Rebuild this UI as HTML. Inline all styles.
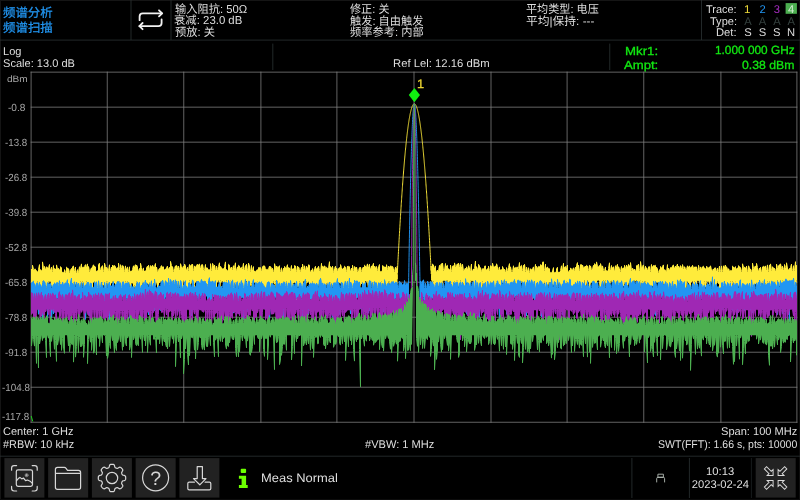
<!DOCTYPE html>
<html lang="zh">
<head>
<meta charset="utf-8">
<title>频谱分析</title>
<style>
html,body{margin:0;padding:0;background:#000;}
body{width:800px;height:500px;position:relative;overflow:hidden;
  font-family:"Liberation Sans","Noto Sans CJK SC",sans-serif;color:#dedede;font-size:11.2px;line-height:1;text-rendering:geometricPrecision;}
.t{position:absolute;white-space:nowrap;transform-origin:0 0;}
.b{font-size:11.2px;}
.c{font-size:11.5px;}
.big{font-size:12.4px;-webkit-text-stroke:0.25px #2196f3;}
.g{font-size:11.8px;color:#12e812;-webkit-text-stroke:0.3px #12e812;}
.m{font-size:12.2px;}
.y{font-size:10.3px;color:#a6a6a6;}
.y0{font-size:9.2px;}
.blue{color:#2196f3;}
.yel{color:#f0dc3a;}
.mk{font-size:12.3px;color:#e8d232;-webkit-text-stroke:0.3px #e8d232;}
.pur{color:#a62cc0;}
.dim{color:#34403e;}
.n4{color:#d4ecd4;}
.vl{position:absolute;width:1px;background:#232a2a;}
.hl{position:absolute;height:1px;background:#1e2828;}
.box{position:absolute;}
.btn{position:absolute;top:458px;width:40px;height:39.6px;background:#222;}
svg{position:absolute;left:0;top:0;}
#root{position:absolute;left:0;top:0;width:800px;height:500px;will-change:transform;}
</style>
</head>
<body>
<div id="root">
<!-- outer frame -->
<div class="hl" style="left:0;top:0;width:800px;background:#151515"></div>
<div class="vl" style="left:0;top:0;height:500px;background:#141414"></div>
<div class="vl" style="left:799px;top:0;height:500px;background:#0e0e0e"></div>
<div class="hl" style="left:0;top:499px;width:800px;background:#0c0c0c"></div>

<!-- highlighted trace number -->
<svg width="800" height="20" viewBox="0 0 800 20"><rect x="785.6" y="3.1" width="11.3" height="10.7" fill="#4caf50"/></svg>


<!-- all text -->
<div class="t c blue big" id="t1" style="left:2.75px;top:7.10px;transform:scaleX(1.003)">频谱分析</div>
<div class="t c blue big" id="t2" style="left:2.75px;top:21.50px;transform:scaleX(1.004)">频谱扫描</div>
<div class="t c" id="a1" style="left:174.59px;top:5.25px;transform:scaleX(0.979)">输入阻抗: 50Ω</div>
<div class="t c" id="a2" style="left:174.27px;top:15.85px;transform:scaleX(0.989)">衰减: 23.0 dB</div>
<div class="t c" id="a3" style="left:175.10px;top:27.65px;transform:scaleX(0.980)">预放: 关</div>
<div class="t c" id="b1" style="left:350.41px;top:5.25px;transform:scaleX(0.966)">修正: 关</div>
<div class="t c" id="b2" style="left:350.41px;top:17.25px;transform:scaleX(0.973)">触发: 自由触发</div>
<div class="t c" id="b3" style="left:350.41px;top:28.25px;transform:scaleX(0.977)">频率参考: 内部</div>
<div class="t c" id="c1" style="left:526.02px;top:5.25px;transform:scaleX(0.966)">平均类型: 电压</div>
<div class="t c" id="c2" style="left:525.99px;top:17.25px;transform:scaleX(1.023)">平均|保持: ---</div>
<div class="t b" id="d1" style="left:706.06px;top:5.25px;transform:scaleX(0.978)">Trace:</div>
<div class="t b" id="d2" style="left:709.81px;top:16.65px;transform:scaleX(0.985)">Type:</div>
<div class="t b" id="d3" style="left:715.84px;top:28.25px;transform:scaleX(1.003)">Det:</div>
<div class="t b yel" id="n1" style="left:744.45px;top:5.25px;transform:scaleX(1.040)">1</div>
<div class="t b blue" id="n2" style="left:759.38px;top:5.25px">2</div>
<div class="t b pur" id="n3" style="left:773.85px;top:5.25px">3</div>
<div class="t b n4" id="n4" style="left:788.12px;top:5.25px">4</div>
<div class="t b dim" id="A1" style="left:744.28px;top:16.65px">A</div>
<div class="t b dim" id="A2" style="left:758.75px;top:16.65px">A</div>
<div class="t b dim" id="A3" style="left:773.22px;top:16.65px">A</div>
<div class="t b dim" id="A4" style="left:787.50px;top:16.65px">A</div>
<div class="t b" id="S1" style="left:744.28px;top:28.25px">S</div>
<div class="t b" id="S2" style="left:758.75px;top:28.25px">S</div>
<div class="t b" id="S3" style="left:773.10px;top:28.25px">S</div>
<div class="t b" id="S4" style="left:787.12px;top:28.25px">N</div>
<div class="t b" id="e1" style="left:3.12px;top:47.25px;transform:scaleX(0.988)">Log</div>
<div class="t b" id="e2" style="left:3.01px;top:58.75px;transform:scaleX(0.989)">Scale: 13.0 dB</div>
<div class="t b" id="e3" style="left:392.84px;top:59.15px;transform:scaleX(1.010)">Ref Lel: 12.16 dBm</div>
<div class="t g" id="g1" style="left:624.97px;top:45.90px;transform:scaleX(1.122)">Mkr1:</div>
<div class="t g" id="g2" style="left:624.13px;top:60.15px;transform:scaleX(1.112)">Ampt:</div>
<div class="t g" id="g3" style="left:715.15px;top:45.15px;transform:scaleX(1.003)">1.000 000 GHz</div>
<div class="t g" id="g4" style="left:742.15px;top:59.50px;transform:scaleX(1.038)">0.38 dBm</div>
<div class="t y y0" id="y0" style="left:6.70px;top:75.20px;transform:scaleX(1.098)">dBm</div>
<div class="t b" id="f1" style="left:2.97px;top:427.45px;transform:scaleX(0.985)">Center: 1 GHz</div>
<div class="t b" id="f2" style="left:3.15px;top:439.55px;transform:scaleX(0.972)">#RBW: 10 kHz</div>
<div class="t b" id="f3" style="left:364.72px;top:440.05px;transform:scaleX(0.989)">#VBW: 1 MHz</div>
<div class="t b" id="f4" style="left:720.56px;top:427.45px;transform:scaleX(0.989)">Span: 100 MHz</div>
<div class="t b" id="f5" style="left:657.78px;top:439.55px;transform:scaleX(0.941)">SWT(FFT): 1.66 s, pts: 10000</div>
<div class="t m" id="m1" style="left:260.80px;top:471.85px;transform:scaleX(1.060)">Meas Normal</div>
<div class="t b" id="k1" style="left:706.14px;top:467.25px;transform:scaleX(1.006)">10:13</div>
<div class="t b" id="k2" style="left:691.76px;top:480.05px">2023-02-24</div>
<div class="t mk" id="mk" style="left:416.86px;top:77.60px;transform:scaleX(1.040)">1</div>
<div class="t y" id="y1" style="left:7.59px;top:104.29px;transform:scaleX(0.980)">-0.8</div>
<div class="t y" id="y2" style="left:5.22px;top:139.33px;transform:scaleX(0.947)">-13.8</div>
<div class="t y" id="y3" style="left:5.22px;top:174.37px;transform:scaleX(0.947)">-26.8</div>
<div class="t y" id="y4" style="left:5.22px;top:209.41px;transform:scaleX(0.947)">-39.8</div>
<div class="t y" id="y5" style="left:5.22px;top:244.45px;transform:scaleX(0.947)">-52.8</div>
<div class="t y" id="y6" style="left:5.22px;top:279.49px;transform:scaleX(0.947)">-65.8</div>
<div class="t y" id="y7" style="left:5.22px;top:313.53px;transform:scaleX(0.947)">-78.8</div>
<div class="t y" id="y8" style="left:5.22px;top:348.57px;transform:scaleX(0.947)">-91.8</div>
<div class="t y" id="y9" style="left:2.00px;top:383.61px;transform:scaleX(0.954)">-104.8</div>
<div class="t y" id="y10" style="left:2.00px;top:413.05px;transform:scaleX(0.954)">-117.8</div>


<!-- plot + icons -->
<svg width="800" height="500" viewBox="0 0 800 500">
<g fill="#222222"><rect x="4.40" y="458.1" width="40" height="39.5"/><rect x="48.15" y="458.1" width="40" height="39.5"/><rect x="91.90" y="458.1" width="40" height="39.5"/><rect x="135.65" y="458.1" width="40" height="39.5"/><rect x="179.40" y="458.1" width="40" height="39.5"/><rect x="755.70" y="458.1" width="40" height="39.5"/></g>
<g stroke="#2b3234" stroke-width="0.8">
<line x1="0" y1="40.1" x2="800" y2="40.1"/>
<line x1="0" y1="456.2" x2="800" y2="456.2"/>
<line x1="131.0" y1="0" x2="131.0" y2="40"/>
<line x1="171.0" y1="0" x2="171.0" y2="40"/>
<line x1="701.5" y1="0" x2="701.5" y2="40"/>
<line x1="272.8" y1="43.6" x2="272.8" y2="70"/>
<line x1="609.75" y1="43.6" x2="609.75" y2="70"/>
<line x1="631.9" y1="458" x2="631.9" y2="498"/>
<line x1="689.4" y1="458" x2="689.4" y2="498"/>
<line x1="751.4" y1="458" x2="751.4" y2="498" stroke="#1c2122"/>
</g>
<g stroke="#808080" stroke-width="0.78"><line x1="31.10" y1="71.65" x2="31.10" y2="422.75"/><line x1="107.25" y1="71.65" x2="107.25" y2="422.75"/><line x1="183.75" y1="71.65" x2="183.75" y2="422.75"/><line x1="260.90" y1="71.65" x2="260.90" y2="422.75"/><line x1="336.90" y1="71.65" x2="336.90" y2="422.75"/><line x1="414.00" y1="71.65" x2="414.00" y2="422.75"/><line x1="491.00" y1="71.65" x2="491.00" y2="422.75"/><line x1="567.10" y1="71.65" x2="567.10" y2="422.75"/><line x1="643.75" y1="71.65" x2="643.75" y2="422.75"/><line x1="720.90" y1="71.65" x2="720.90" y2="422.75"/><line x1="796.90" y1="71.65" x2="796.90" y2="422.75"/><line x1="30.60" y1="72.15" x2="797.40" y2="72.15"/><line x1="30.60" y1="107.16" x2="797.40" y2="107.16"/><line x1="30.60" y1="142.17" x2="797.40" y2="142.17"/><line x1="30.60" y1="177.18" x2="797.40" y2="177.18"/><line x1="30.60" y1="212.19" x2="797.40" y2="212.19"/><line x1="30.60" y1="247.20" x2="797.40" y2="247.20"/><line x1="30.60" y1="282.21" x2="797.40" y2="282.21"/><line x1="30.60" y1="317.22" x2="797.40" y2="317.22"/><line x1="30.60" y1="352.23" x2="797.40" y2="352.23"/><line x1="30.60" y1="387.24" x2="797.40" y2="387.24"/><line x1="30.60" y1="422.25" x2="797.40" y2="422.25"/></g>
<g fill="none" stroke-width="1" stroke-linejoin="bevel">
<path d="M31.5 269.0L31.5 282.6L32.5 292.1L32.5 265.2L33.5 269.3L33.5 285.8L34.5 286.6L34.5 269.2L35.5 269.1L35.5 290.2L36.5 285.4L36.5 270.5L37.5 271.6L37.5 281.6L38.5 285.6L38.5 269.2L39.5 264.6L39.5 285.9L40.5 285.3L40.5 269.6L41.5 270.3L41.5 287.9L42.5 281.4L42.5 261.9L43.5 267.9L43.5 282.1L44.5 287.7L44.5 266.4L45.5 268.8L45.5 292.0L46.5 286.4L46.5 266.8L47.5 267.4L47.5 284.3L48.5 281.7L48.5 267.8L49.5 264.5L49.5 281.6L50.5 281.6L50.5 270.0L51.5 267.1L51.5 285.2L52.5 287.2L52.5 271.3L53.5 265.6L53.5 290.3L54.5 294.4L54.5 268.4L55.5 269.0L55.5 290.2L56.5 283.4L56.5 264.9L57.5 269.0L57.5 293.7L58.5 283.5L58.5 268.3L59.5 269.5L59.5 292.7L60.5 282.6L60.5 266.6L61.5 267.7L61.5 288.1L62.5 284.9L62.5 272.1L63.5 272.2L63.5 287.2L64.5 284.3L64.5 269.6L65.5 272.3L65.5 287.7L66.5 285.3L66.5 267.1L67.5 268.0L67.5 286.8L68.5 289.7L68.5 268.6L69.5 272.7L69.5 290.5L70.5 288.1L70.5 270.1L71.5 268.4L71.5 301.9L72.5 289.0L72.5 266.7L73.5 266.0L73.5 282.6L74.5 291.5L74.5 270.3L75.5 267.0L75.5 284.4L76.5 283.1L76.5 272.5L77.5 269.6L77.5 284.6L78.5 296.8L78.5 272.1L79.5 266.7L79.5 294.4L80.5 281.7L80.5 267.9L81.5 263.9L81.5 287.9L82.5 281.6L82.5 267.2L83.5 267.1L83.5 300.6L84.5 286.1L84.5 266.4L85.5 264.6L85.5 301.1L86.5 281.4L86.5 266.8L87.5 263.9L87.5 284.3L88.5 294.8L88.5 266.5L89.5 271.5L89.5 286.3L90.5 304.6L90.5 270.1L91.5 267.8L91.5 290.6L92.5 296.8L92.5 266.7L93.5 264.8L93.5 282.1L94.5 281.6L94.5 266.0L95.5 266.9L95.5 302.5L96.5 285.0L96.5 271.1L97.5 270.6L97.5 293.0L98.5 284.1L98.5 264.4L99.5 263.2L99.5 285.1L100.5 300.8L100.5 269.7L101.5 266.6L101.5 294.0L102.5 282.6L102.5 265.6L103.5 271.3L103.5 285.2L104.5 285.1L104.5 263.2L105.5 266.6L105.5 292.5L106.5 281.4L106.5 267.2L107.5 268.2L107.5 281.6L108.5 286.9L108.5 270.1L109.5 264.8L109.5 284.2L110.5 288.3L110.5 270.5L111.5 267.0L111.5 283.2L112.5 281.7L112.5 265.0L113.5 266.0L113.5 283.0L114.5 283.0L114.5 265.4L115.5 266.7L115.5 288.8L116.5 288.3L116.5 268.2L117.5 267.6L117.5 281.5L118.5 286.4L118.5 263.2L119.5 269.5L119.5 281.4L120.5 294.3L120.5 264.7L121.5 267.5L121.5 290.0L122.5 294.3L122.5 265.4L123.5 266.2L123.5 285.2L124.5 304.5L124.5 271.2L125.5 265.9L125.5 281.4L126.5 289.2L126.5 269.0L127.5 266.9L127.5 281.4L128.5 286.1L128.5 271.3L129.5 266.8L129.5 282.1L130.5 290.3L130.5 271.1L131.5 270.9L131.5 283.3L132.5 283.2L132.5 269.3L133.5 265.8L133.5 290.7L134.5 285.5L134.5 266.5L135.5 264.7L135.5 286.6L136.5 281.3L136.5 265.0L137.5 267.0L137.5 286.2L138.5 294.3L138.5 270.8L139.5 268.4L139.5 284.3L140.5 290.9L140.5 263.3L141.5 267.5L141.5 289.1L142.5 281.0L142.5 270.2L143.5 267.9L143.5 294.2L144.5 288.4L144.5 271.0L145.5 270.7L145.5 295.6L146.5 300.0L146.5 267.9L147.5 266.2L147.5 283.4L148.5 284.4L148.5 265.1L149.5 269.1L149.5 282.5L150.5 287.8L150.5 265.6L151.5 266.3L151.5 281.7L152.5 290.2L152.5 265.2L153.5 266.6L153.5 283.5L154.5 281.8L154.5 266.4L155.5 263.5L155.5 285.5L156.5 282.0L156.5 267.1L157.5 271.9L157.5 294.0L158.5 288.1L158.5 270.1L159.5 268.4L159.5 282.8L160.5 281.7L160.5 267.3L161.5 265.6L161.5 281.8L162.5 287.4L162.5 266.8L163.5 266.8L163.5 284.8L164.5 289.1L164.5 269.8L165.5 268.8L165.5 287.4L166.5 282.2L166.5 267.5L167.5 266.1L167.5 284.8L168.5 290.1L168.5 268.6L169.5 267.2L169.5 286.6L170.5 290.8L170.5 261.4L171.5 265.6L171.5 294.7L172.5 281.6L172.5 266.6L173.5 271.4L173.5 284.6L174.5 290.2L174.5 268.6L175.5 265.8L175.5 282.8L176.5 284.3L176.5 265.4L177.5 267.3L177.5 281.1L178.5 294.6L178.5 266.0L179.5 269.5L179.5 285.2L180.5 287.6L180.5 263.7L181.5 266.8L181.5 283.5L182.5 288.6L182.5 267.6L183.5 266.1L183.5 280.6L184.5 282.1L184.5 264.1L185.5 265.5L185.5 291.7L186.5 287.3L186.5 270.0L187.5 267.2L187.5 296.5L188.5 290.4L188.5 270.5L189.5 264.5L189.5 280.3L190.5 294.5L190.5 265.5L191.5 264.6L191.5 281.1L192.5 285.6L192.5 264.1L193.5 270.7L193.5 300.3L194.5 284.4L194.5 265.9L195.5 266.9L195.5 282.2L196.5 281.3L196.5 265.2L197.5 264.2L197.5 289.6L198.5 281.4L198.5 264.8L199.5 264.0L199.5 293.6L200.5 286.5L200.5 267.7L201.5 264.7L201.5 291.6L202.5 281.6L202.5 264.5L203.5 269.3L203.5 281.8L204.5 289.9L204.5 270.2L205.5 264.5L205.5 281.4L206.5 289.9L206.5 267.7L207.5 268.0L207.5 284.5L208.5 295.6L208.5 269.5L209.5 269.6L209.5 288.5L210.5 294.9L210.5 263.7L211.5 270.7L211.5 303.3L212.5 284.8L212.5 263.4L213.5 265.4L213.5 286.9L214.5 283.3L214.5 265.0L215.5 269.8L215.5 293.7L216.5 291.7L216.5 266.0L217.5 269.5L217.5 282.1L218.5 280.7L218.5 266.3L219.5 262.8L219.5 295.2L220.5 280.8L220.5 266.3L221.5 267.9L221.5 281.8L222.5 281.2L222.5 268.7L223.5 268.5L223.5 289.4L224.5 285.9L224.5 266.6L225.5 261.9L225.5 296.1L226.5 280.5L226.5 269.5L227.5 270.4L227.5 290.1L228.5 290.4L228.5 264.3L229.5 265.1L229.5 299.8L230.5 280.1L230.5 268.1L231.5 267.0L231.5 292.9L232.5 282.5L232.5 269.5L233.5 265.7L233.5 288.4L234.5 287.4L234.5 267.2L235.5 262.8L235.5 282.7L236.5 289.2L236.5 270.1L237.5 266.9L237.5 288.4L238.5 285.1L238.5 265.3L239.5 266.1L239.5 289.1L240.5 284.0L240.5 267.9L241.5 267.3L241.5 297.2L242.5 283.0L242.5 268.5L243.5 263.3L243.5 290.1L244.5 298.8L244.5 269.7L245.5 265.5L245.5 281.0L246.5 281.1L246.5 264.1L247.5 270.1L247.5 287.3L248.5 282.6L248.5 263.1L249.5 266.0L249.5 286.5L250.5 285.4L250.5 271.2L251.5 265.5L251.5 283.6L252.5 290.9L252.5 269.7L253.5 266.6L253.5 281.0L254.5 282.4L254.5 271.0L255.5 271.3L255.5 307.6L256.5 284.7L256.5 270.2L257.5 269.6L257.5 281.8L258.5 289.8L258.5 267.5L259.5 267.4L259.5 289.1L260.5 304.3L260.5 267.5L261.5 270.7L261.5 298.1L262.5 294.2L262.5 266.8L263.5 265.7L263.5 293.2L264.5 285.9L264.5 265.8L265.5 268.6L265.5 293.7L266.5 287.3L266.5 269.3L267.5 269.3L267.5 282.0L268.5 298.3L268.5 269.1L269.5 266.1L269.5 282.0L270.5 297.4L270.5 266.5L271.5 268.3L271.5 286.1L272.5 283.1L272.5 268.2L273.5 271.6L273.5 281.6L274.5 284.2L274.5 263.7L275.5 267.1L275.5 281.5L276.5 293.7L276.5 266.0L277.5 267.1L277.5 281.5L278.5 293.6L278.5 267.0L279.5 265.7L279.5 282.1L280.5 296.5L280.5 271.6L281.5 267.8L281.5 289.8L282.5 299.3L282.5 271.9L283.5 268.2L283.5 281.8L284.5 290.2L284.5 266.4L285.5 267.4L285.5 286.8L286.5 281.4L286.5 267.3L287.5 264.7L287.5 307.7L288.5 302.2L288.5 267.4L289.5 268.0L289.5 295.8L290.5 285.1L290.5 270.5L291.5 265.5L291.5 292.2L292.5 283.9L292.5 268.9L293.5 268.6L293.5 283.1L294.5 282.3L294.5 265.5L295.5 266.0L295.5 292.6L296.5 303.8L296.5 271.2L297.5 266.0L297.5 286.5L298.5 286.4L298.5 266.9L299.5 269.3L299.5 281.3L300.5 290.9L300.5 271.2L301.5 267.3L301.5 286.8L302.5 288.4L302.5 264.1L303.5 268.5L303.5 281.2L304.5 281.1L304.5 265.8L305.5 269.9L305.5 287.3L306.5 281.3L306.5 266.1L307.5 267.9L307.5 282.4L308.5 281.7L308.5 264.8L309.5 265.2L309.5 288.6L310.5 298.6L310.5 271.5L311.5 269.9L311.5 301.1L312.5 281.7L312.5 268.6L313.5 271.9L313.5 293.4L314.5 287.8L314.5 268.4L315.5 266.3L315.5 290.4L316.5 288.6L316.5 268.9L317.5 267.6L317.5 287.1L318.5 284.7L318.5 266.1L319.5 270.4L319.5 285.7L320.5 282.0L320.5 272.0L321.5 263.3L321.5 289.8L322.5 289.8L322.5 266.1L323.5 266.7L323.5 292.1L324.5 291.9L324.5 265.8L325.5 267.2L325.5 286.5L326.5 283.6L326.5 267.2L327.5 268.1L327.5 282.1L328.5 291.9L328.5 267.9L329.5 261.7L329.5 294.5L330.5 282.3L330.5 266.5L331.5 267.6L331.5 288.0L332.5 285.4L332.5 266.0L333.5 272.1L333.5 282.1L334.5 288.7L334.5 268.5L335.5 266.2L335.5 299.3L336.5 297.3L336.5 267.9L337.5 270.6L337.5 285.1L338.5 309.7L338.5 268.4L339.5 267.5L339.5 282.9L340.5 283.3L340.5 264.6L341.5 267.6L341.5 286.9L342.5 292.3L342.5 268.9L343.5 268.0L343.5 297.7L344.5 281.9L344.5 266.2L345.5 267.1L345.5 281.8L346.5 286.1L346.5 271.2L347.5 266.1L347.5 295.1L348.5 293.5L348.5 266.3L349.5 266.7L349.5 289.0L350.5 292.5L350.5 270.9L351.5 268.0L351.5 296.8L352.5 294.2L352.5 265.2L353.5 270.7L353.5 289.7L354.5 288.1L354.5 266.5L355.5 267.4L355.5 281.4L356.5 301.1L356.5 267.0L357.5 271.6L357.5 281.6L358.5 293.8L358.5 270.8L359.5 267.5L359.5 288.9L360.5 283.9L360.5 267.2L361.5 271.3L361.5 283.9L362.5 282.0L362.5 268.1L363.5 267.0L363.5 293.8L364.5 288.8L364.5 265.2L365.5 266.1L365.5 281.0L366.5 281.7L366.5 266.9L367.5 263.9L367.5 281.1L368.5 289.1L368.5 266.5L369.5 264.2L369.5 291.2L370.5 287.2L370.5 269.0L371.5 265.9L371.5 281.0L372.5 288.8L372.5 266.0L373.5 263.3L373.5 282.6L374.5 296.7L374.5 266.1L375.5 267.2L375.5 286.5L376.5 282.4L376.5 266.4L377.5 270.3L377.5 292.0L378.5 286.4L378.5 266.8L379.5 264.5L379.5 288.0L380.5 283.5L380.5 271.3L381.5 271.2L381.5 281.2L382.5 302.5L382.5 265.5L383.5 266.2L383.5 283.1L384.5 293.9L384.5 266.9L385.5 267.0L385.5 281.1L386.5 287.5L386.5 264.7L387.5 269.2L387.5 284.2L388.5 281.2L388.5 266.0L389.5 267.0L389.5 281.2L390.5 287.9L390.5 265.9L391.5 266.2L391.5 281.4L392.5 309.1L392.5 266.4L393.5 268.5L393.5 286.7L394.5 284.9L394.5 271.5L395.5 267.1L395.5 295.6" stroke="#ffeb3b"/>
<path d="M395.5 295.6L396.06 281.4L396.14 271.2L396.23 293.9L396.31 285.8L396.39 278.0L396.48 274.9L396.56 276.4L396.64 268.4L396.73 271.0L396.81 284.2L396.89 279.2L396.98 274.6L397.06 279.1L397.14 271.9L397.23 266.3L397.31 272.8L397.39 272.4L397.48 270.7L397.56 269.1L397.64 267.4L397.72 265.8L397.81 264.2L397.89 262.6L397.97 260.9L398.06 259.4L398.14 257.8L398.22 256.2L398.31 254.6L398.39 253.0L398.47 251.5L398.56 249.9L398.64 248.4L398.72 246.9L398.81 245.3L398.89 243.8L398.97 242.3L399.06 240.8L399.14 239.3L399.22 237.8L399.31 236.4L399.39 234.9L399.47 233.4L399.56 232.0L399.64 230.5L399.72 229.1L399.81 227.7L399.89 226.3L399.97 224.9L400.06 223.5L400.14 222.1L400.22 220.7L400.31 219.3L400.39 217.9L400.47 216.6L400.56 215.2L400.64 213.9L400.72 212.5L400.81 211.2L400.89 209.9L400.97 208.6L401.05 207.3L401.14 206.0L401.22 204.7L401.30 203.4L401.39 202.1L401.47 200.9L401.55 199.6L401.64 198.4L401.72 197.1L401.80 195.9L401.89 194.7L401.97 193.5L402.05 192.3L402.14 191.1L402.22 189.9L402.30 188.7L402.39 187.5L402.47 186.4L402.55 185.2L402.64 184.0L402.72 182.9L402.80 181.8L402.89 180.7L402.97 179.5L403.05 178.4L403.14 177.3L403.22 176.2L403.30 175.2L403.39 174.1L403.47 173.0L403.55 172.0L403.64 170.9L403.72 169.9L403.80 168.8L403.89 167.8L403.97 166.8L404.05 165.8L404.14 164.8L404.22 163.8L404.30 162.8L404.38 161.8L404.47 160.8L404.55 159.9L404.63 158.9L404.72 158.0L404.80 157.1L404.88 156.1L404.97 155.2L405.05 154.3L405.13 153.4L405.22 152.5L405.30 151.6L405.38 150.7L405.47 149.9L405.55 149.0L405.63 148.1L405.72 147.3L405.80 146.5L405.88 145.6L405.97 144.8L406.05 144.0L406.13 143.2L406.22 142.4L406.30 141.6L406.38 140.8L406.47 140.0L406.55 139.3L406.63 138.5L406.72 137.8L406.80 137.0L406.88 136.3L406.97 135.6L407.05 134.9L407.13 134.2L407.22 133.5L407.30 132.8L407.38 132.1L407.47 131.4L407.55 130.7L407.63 130.1L407.71 129.4L407.80 128.8L407.88 128.2L407.96 127.5L408.05 126.9L408.13 126.3L408.21 125.7L408.30 125.1L408.38 124.5L408.46 123.9L408.55 123.4L408.63 122.8L408.71 122.3L408.80 121.7L408.88 121.2L408.96 120.7L409.05 120.1L409.13 119.6L409.21 119.1L409.30 118.6L409.38 118.1L409.46 117.7L409.55 117.2L409.63 116.7L409.71 116.3L409.80 115.8L409.88 115.4L409.96 115.0L410.05 114.5L410.13 114.1L410.21 113.7L410.30 113.3L410.38 112.9L410.46 112.6L410.55 112.2L410.63 111.8L410.71 111.5L410.79 111.1L410.88 110.8L410.96 110.4L411.04 110.1L411.13 109.8L411.21 109.5L411.29 109.2L411.38 108.9L411.46 108.6L411.54 108.4L411.63 108.1L411.71 107.8L411.79 107.6L411.88 107.3L411.96 107.1L412.04 106.9L412.13 106.7L412.21 106.4L412.29 106.2L412.38 106.1L412.46 105.9L412.54 105.7L412.63 105.5L412.71 105.4L412.79 105.2L412.88 105.1L412.96 104.9L413.04 104.8L413.13 104.7L413.21 104.6L413.29 104.5L413.38 104.4L413.46 104.3L413.54 104.2L413.63 104.1L413.71 104.1L413.79 104.0L413.88 104.0L413.96 103.9L414.04 103.9L414.12 103.9L414.21 103.9L414.29 103.9L414.37 103.9L414.46 103.9L414.54 103.9L414.62 103.9L414.71 104.0L414.79 104.0L414.87 104.1L414.96 104.1L415.04 104.2L415.12 104.3L415.21 104.4L415.29 104.5L415.37 104.6L415.46 104.7L415.54 104.8L415.62 104.9L415.71 105.0L415.79 105.2L415.87 105.3L415.96 105.5L416.04 105.7L416.12 105.8L416.21 106.0L416.29 106.2L416.37 106.4L416.46 106.6L416.54 106.8L416.62 107.1L416.71 107.3L416.79 107.5L416.87 107.8L416.96 108.0L417.04 108.3L417.12 108.6L417.21 108.8L417.29 109.1L417.37 109.4L417.45 109.7L417.54 110.1L417.62 110.4L417.70 110.7L417.79 111.0L417.87 111.4L417.95 111.7L418.04 112.1L418.12 112.5L418.20 112.9L418.29 113.2L418.37 113.6L418.45 114.0L418.54 114.5L418.62 114.9L418.70 115.3L418.79 115.7L418.87 116.2L418.95 116.6L419.04 117.1L419.12 117.6L419.20 118.0L419.29 118.5L419.37 119.0L419.45 119.5L419.54 120.0L419.62 120.6L419.70 121.1L419.79 121.6L419.87 122.2L419.95 122.7L420.04 123.3L420.12 123.8L420.20 124.4L420.29 125.0L420.37 125.6L420.45 126.2L420.53 126.8L420.62 127.4L420.70 128.0L420.78 128.7L420.87 129.3L420.95 129.9L421.03 130.6L421.12 131.3L421.20 131.9L421.28 132.6L421.37 133.3L421.45 134.0L421.53 134.7L421.62 135.4L421.70 136.2L421.78 136.9L421.87 137.6L421.95 138.4L422.03 139.1L422.12 139.9L422.20 140.7L422.28 141.4L422.37 142.2L422.45 143.0L422.53 143.8L422.62 144.6L422.70 145.5L422.78 146.3L422.87 147.1L422.95 148.0L423.03 148.8L423.12 149.7L423.20 150.5L423.28 151.4L423.37 152.3L423.45 153.2L423.53 154.1L423.62 155.0L423.70 155.9L423.78 156.9L423.86 157.8L423.95 158.7L424.03 159.7L424.11 160.6L424.20 161.6L424.28 162.6L424.36 163.6L424.45 164.6L424.53 165.6L424.61 166.6L424.70 167.6L424.78 168.6L424.86 169.6L424.95 170.7L425.03 171.7L425.11 172.8L425.20 173.9L425.28 174.9L425.36 176.0L425.45 177.1L425.53 178.2L425.61 179.3L425.70 180.4L425.78 181.5L425.86 182.7L425.95 183.8L426.03 185.0L426.11 186.1L426.20 187.3L426.28 188.4L426.36 189.6L426.45 190.8L426.53 192.0L426.61 193.2L426.70 194.4L426.78 195.6L426.86 196.9L426.95 198.1L427.03 199.4L427.11 200.6L427.19 201.9L427.28 203.1L427.36 204.4L427.44 205.7L427.53 207.0L427.61 208.3L427.69 209.6L427.78 210.9L427.86 212.3L427.94 213.6L428.03 214.9L428.11 216.3L428.19 217.6L428.28 219.0L428.36 220.4L428.44 221.8L428.53 223.2L428.61 224.6L428.69 226.0L428.78 227.4L428.86 228.8L428.94 230.2L429.03 231.7L429.11 233.1L429.19 234.6L429.28 236.1L429.36 237.5L429.44 239.0L429.53 240.5L429.61 242.0L429.69 243.5L429.78 245.0L429.86 246.5L429.94 248.1L430.03 249.6L430.11 251.2L430.19 252.7L430.28 254.3L430.36 255.9L430.44 257.4L430.52 259.0L430.61 260.6L430.69 262.2L430.77 263.8L430.86 265.5L430.94 267.1L431.02 267.1L431.11 270.4L431.19 266.0L431.27 273.7L431.36 274.1L431.44 269.6L431.52 271.5L431.61 278.7L431.69 280.2L431.77 275.2L431.86 278.0L431.94 275.9" stroke="#ffeb3b" stroke-width="0.95"/>
<path d="M431.94 275.9L432.5 290.3L432.5 264.0L433.5 264.9L433.5 281.6L434.5 298.1L434.5 267.4L435.5 265.9L435.5 283.5L436.5 296.1L436.5 271.2L437.5 270.0L437.5 287.2L438.5 286.0L438.5 270.9L439.5 265.3L439.5 283.2L440.5 294.0L440.5 265.2L441.5 263.6L441.5 288.5L442.5 281.2L442.5 263.0L443.5 270.6L443.5 280.7L444.5 280.7L444.5 270.0L445.5 263.5L445.5 282.5L446.5 280.8L446.5 265.9L447.5 265.3L447.5 280.7L448.5 283.8L448.5 268.7L449.5 269.4L449.5 281.3L450.5 282.6L450.5 265.1L451.5 271.2L451.5 282.3L452.5 298.1L452.5 266.1L453.5 265.6L453.5 286.2L454.5 281.4L454.5 262.9L455.5 266.7L455.5 293.2L456.5 280.9L456.5 265.2L457.5 263.8L457.5 280.9L458.5 286.4L458.5 263.1L459.5 266.3L459.5 286.5L460.5 280.7L460.5 263.3L461.5 266.7L461.5 290.6L462.5 300.0L462.5 264.2L463.5 270.9L463.5 283.4L464.5 288.2L464.5 269.3L465.5 268.1L465.5 283.8L466.5 282.6L466.5 266.8L467.5 268.3L467.5 282.5L468.5 295.1L468.5 265.7L469.5 267.6L469.5 292.0L470.5 280.9L470.5 270.9L471.5 264.0L471.5 280.9L472.5 280.9L472.5 270.9L473.5 268.9L473.5 284.8L474.5 297.5L474.5 268.5L475.5 261.0L475.5 285.6L476.5 291.2L476.5 266.6L477.5 269.1L477.5 290.2L478.5 288.8L478.5 264.3L479.5 265.8L479.5 291.9L480.5 287.1L480.5 267.6L481.5 271.1L481.5 292.7L482.5 281.3L482.5 268.7L483.5 268.6L483.5 302.0L484.5 283.7L484.5 266.2L485.5 265.9L485.5 282.3L486.5 289.4L486.5 269.9L487.5 268.6L487.5 289.6L488.5 291.1L488.5 266.1L489.5 270.7L489.5 285.4L490.5 281.3L490.5 265.7L491.5 266.2L491.5 294.0L492.5 282.3L492.5 263.2L493.5 267.0L493.5 295.8L494.5 290.1L494.5 266.9L495.5 265.8L495.5 294.3L496.5 281.3L496.5 263.8L497.5 266.4L497.5 283.1L498.5 291.3L498.5 269.6L499.5 266.9L499.5 289.9L500.5 288.0L500.5 269.8L501.5 269.5L501.5 281.7L502.5 282.7L502.5 266.5L503.5 269.0L503.5 292.4L504.5 281.7L504.5 269.1L505.5 271.3L505.5 281.5L506.5 292.6L506.5 267.6L507.5 270.6L507.5 293.3L508.5 299.4L508.5 267.3L509.5 263.6L509.5 297.4L510.5 297.3L510.5 266.8L511.5 271.6L511.5 295.2L512.5 298.7L512.5 271.7L513.5 265.8L513.5 281.7L514.5 285.4L514.5 267.8L515.5 267.4L515.5 281.8L516.5 287.8L516.5 267.3L517.5 267.1L517.5 290.6L518.5 292.1L518.5 268.6L519.5 262.5L519.5 301.4L520.5 291.0L520.5 266.2L521.5 265.3L521.5 281.6L522.5 283.5L522.5 270.5L523.5 265.3L523.5 287.1L524.5 283.5L524.5 264.3L525.5 271.4L525.5 288.2L526.5 289.8L526.5 267.1L527.5 271.0L527.5 282.2L528.5 283.8L528.5 267.7L529.5 272.2L529.5 292.0L530.5 286.2L530.5 268.8L531.5 269.3L531.5 286.5L532.5 299.4L532.5 268.9L533.5 266.9L533.5 294.6L534.5 283.4L534.5 272.0L535.5 264.4L535.5 287.8L536.5 294.4L536.5 266.2L537.5 267.9L537.5 282.5L538.5 290.6L538.5 266.4L539.5 266.5L539.5 285.8L540.5 281.6L540.5 264.6L541.5 265.1L541.5 295.7L542.5 288.6L542.5 262.1L543.5 261.9L543.5 284.2L544.5 281.9L544.5 270.3L545.5 264.2L545.5 288.5L546.5 282.1L546.5 267.7L547.5 267.0L547.5 288.1L548.5 282.2L548.5 268.2L549.5 268.7L549.5 282.2L550.5 282.3L550.5 272.3L551.5 272.3L551.5 286.5L552.5 284.6L552.5 270.9L553.5 267.6L553.5 284.8L554.5 282.3L554.5 272.3L555.5 272.1L555.5 289.4L556.5 285.4L556.5 268.6L557.5 267.3L557.5 286.5L558.5 282.1L558.5 272.1L559.5 272.0L559.5 287.7L560.5 284.2L560.5 270.6L561.5 265.8L561.5 302.0L562.5 293.6L562.5 270.0L563.5 263.3L563.5 283.0L564.5 293.9L564.5 267.1L565.5 266.5L565.5 287.7L566.5 281.6L566.5 267.8L567.5 265.0L567.5 289.3L568.5 282.7L568.5 271.6L569.5 270.2L569.5 299.4L570.5 287.4L570.5 267.9L571.5 269.1L571.5 287.9L572.5 291.7L572.5 269.9L573.5 267.8L573.5 288.9L574.5 294.5L574.5 270.2L575.5 267.2L575.5 286.6L576.5 288.7L576.5 265.3L577.5 262.6L577.5 283.5L578.5 288.6L578.5 265.0L579.5 270.8L579.5 285.2L580.5 290.6L580.5 264.6L581.5 264.6L581.5 290.8L582.5 292.6L582.5 265.1L583.5 268.0L583.5 283.8L584.5 280.4L584.5 267.0L585.5 266.0L585.5 287.8L586.5 282.1L586.5 265.3L587.5 266.0L587.5 280.3L588.5 281.8L588.5 270.3L589.5 265.3L589.5 289.7L590.5 282.0L590.5 265.9L591.5 269.8L591.5 282.1L592.5 283.5L592.5 268.9L593.5 265.3L593.5 295.7L594.5 281.9L594.5 263.7L595.5 264.3L595.5 285.3L596.5 297.3L596.5 261.9L597.5 266.1L597.5 280.6L598.5 280.3L598.5 266.4L599.5 265.4L599.5 281.4L600.5 293.9L600.5 263.6L601.5 267.1L601.5 292.6L602.5 289.0L602.5 265.9L603.5 270.3L603.5 280.6L604.5 289.7L604.5 270.6L605.5 267.0L605.5 280.7L606.5 287.3L606.5 270.5L607.5 270.8L607.5 280.8L608.5 300.6L608.5 268.4L609.5 262.8L609.5 284.5L610.5 281.7L610.5 269.8L611.5 265.5L611.5 280.9L612.5 282.4L612.5 267.4L613.5 266.8L613.5 292.0L614.5 297.2L614.5 271.0L615.5 265.7L615.5 286.2L616.5 281.4L616.5 266.5L617.5 264.3L617.5 281.3L618.5 288.2L618.5 266.7L619.5 268.7L619.5 283.4L620.5 290.9L620.5 271.4L621.5 266.5L621.5 283.4L622.5 286.5L622.5 268.3L623.5 267.9L623.5 285.9L624.5 282.7L624.5 265.3L625.5 268.1L625.5 284.4L626.5 285.4L626.5 265.0L627.5 267.0L627.5 286.6L628.5 282.0L628.5 264.3L629.5 265.8L629.5 284.9L630.5 294.8L630.5 262.6L631.5 270.3L631.5 285.5L632.5 298.5L632.5 268.2L633.5 269.7L633.5 282.7L634.5 280.2L634.5 269.0L635.5 270.3L635.5 281.0L636.5 280.4L636.5 265.6L637.5 265.2L637.5 284.4L638.5 283.6L638.5 264.0L639.5 270.7L639.5 295.5L640.5 280.9L640.5 261.6L641.5 268.0L641.5 292.7L642.5 281.4L642.5 266.2L643.5 264.9L643.5 283.7L644.5 281.4L644.5 270.0L645.5 266.1L645.5 281.7L646.5 286.1L646.5 267.7L647.5 269.5L647.5 294.9L648.5 288.4L648.5 266.8L649.5 266.6L649.5 286.3L650.5 290.3L650.5 271.5L651.5 264.5L651.5 286.4L652.5 285.9L652.5 266.5L653.5 265.4L653.5 281.8L654.5 290.4L654.5 265.5L655.5 265.3L655.5 282.0L656.5 282.2L656.5 267.2L657.5 269.0L657.5 282.3L658.5 282.3L658.5 272.3L659.5 269.6L659.5 283.2L660.5 291.9L660.5 266.5L661.5 267.8L661.5 287.6L662.5 299.1L662.5 266.2L663.5 264.9L663.5 282.7L664.5 286.4L664.5 269.6L665.5 270.2L665.5 292.5L666.5 282.6L666.5 272.0L667.5 264.6L667.5 286.6L668.5 303.7L668.5 268.1L669.5 269.4L669.5 285.2L670.5 289.7L670.5 267.5L671.5 267.3L671.5 286.7L672.5 290.5L672.5 265.7L673.5 265.0L673.5 281.9L674.5 297.3L674.5 267.9L675.5 266.0L675.5 286.2L676.5 294.0L676.5 266.3L677.5 264.1L677.5 284.4L678.5 281.7L678.5 266.1L679.5 267.2L679.5 283.2L680.5 285.4L680.5 265.6L681.5 267.3L681.5 289.2L682.5 295.0L682.5 264.6L683.5 268.4L683.5 284.0L684.5 289.9L684.5 266.7L685.5 268.4L685.5 295.8L686.5 281.1L686.5 269.2L687.5 265.8L687.5 281.5L688.5 282.7L688.5 266.8L689.5 266.0L689.5 288.7L690.5 292.7L690.5 267.3L691.5 266.7L691.5 282.0L692.5 281.3L692.5 265.3L693.5 268.0L693.5 297.0L694.5 281.5L694.5 267.0L695.5 266.9L695.5 295.1L696.5 296.1L696.5 266.8L697.5 270.8L697.5 280.8L698.5 280.9L698.5 265.3L699.5 269.5L699.5 291.0L700.5 291.1L700.5 266.9L701.5 268.2L701.5 288.0L702.5 292.6L702.5 266.8L703.5 266.2L703.5 299.1L704.5 281.4L704.5 267.7L705.5 268.8L705.5 287.0L706.5 281.4L706.5 266.2L707.5 267.2L707.5 281.7L708.5 281.6L708.5 267.7L709.5 266.9L709.5 285.1L710.5 281.3L710.5 265.8L711.5 270.0L711.5 281.7L712.5 282.8L712.5 270.2L713.5 268.9L713.5 285.0L714.5 294.9L714.5 268.0L715.5 267.8L715.5 288.4L716.5 290.6L716.5 270.7L717.5 268.0L717.5 281.7L718.5 283.6L718.5 271.6L719.5 266.1L719.5 289.1L720.5 292.3L720.5 271.5L721.5 265.9L721.5 290.2L722.5 290.3L722.5 271.5L723.5 265.8L723.5 298.3L724.5 292.6L724.5 266.5L725.5 265.0L725.5 287.8L726.5 291.2L726.5 266.7L727.5 269.1L727.5 288.8L728.5 285.6L728.5 268.7L729.5 270.7L729.5 292.4L730.5 281.6L730.5 270.4L731.5 270.4L731.5 289.2L732.5 281.6L732.5 266.1L733.5 267.0L733.5 282.8L734.5 298.7L734.5 267.7L735.5 266.6L735.5 281.9L736.5 291.8L736.5 268.6L737.5 267.9L737.5 286.1L738.5 285.8L738.5 265.6L739.5 266.6L739.5 284.7L740.5 298.6L740.5 267.5L741.5 271.6L741.5 286.0L742.5 301.0L742.5 263.8L743.5 267.2L743.5 287.5L744.5 290.3L744.5 266.9L745.5 267.9L745.5 298.6L746.5 299.5L746.5 266.0L747.5 271.8L747.5 304.2L748.5 285.9L748.5 265.8L749.5 267.6L749.5 292.9L750.5 292.4L750.5 268.9L751.5 271.3L751.5 288.8L752.5 298.2L752.5 263.2L753.5 268.2L753.5 290.2L754.5 285.7L754.5 267.1L755.5 265.9L755.5 284.0L756.5 283.4L756.5 263.4L757.5 267.4L757.5 291.3L758.5 284.5L758.5 271.0L759.5 268.1L759.5 294.5L760.5 290.1L760.5 267.2L761.5 271.9L761.5 285.8L762.5 281.8L762.5 266.9L763.5 266.2L763.5 292.4L764.5 283.6L764.5 267.0L765.5 265.9L765.5 283.7L766.5 295.3L766.5 269.7L767.5 264.9L767.5 281.5L768.5 292.5L768.5 271.4L769.5 264.9L769.5 281.3L770.5 289.7L770.5 263.9L771.5 270.2L771.5 283.7L772.5 285.9L772.5 266.8L773.5 267.7L773.5 281.1L774.5 286.4L774.5 268.2L775.5 270.4L775.5 281.0L776.5 292.8L776.5 264.1L777.5 267.7L777.5 280.6L778.5 286.7L778.5 265.8L779.5 264.6L779.5 285.8L780.5 280.8L780.5 263.8L781.5 268.2L781.5 290.1L782.5 280.8L782.5 266.1L783.5 269.3L783.5 282.0L784.5 288.3L784.5 264.5L785.5 267.4L785.5 288.0L786.5 291.7L786.5 262.8L787.5 268.0L787.5 292.1L788.5 281.1L788.5 269.6L789.5 268.4L789.5 280.9L790.5 288.2L790.5 267.8L791.5 264.1L791.5 290.5L792.5 281.8L792.5 270.6L793.5 265.7L793.5 280.5L794.5 294.0L794.5 270.2L795.5 261.7L795.5 285.2L796.5 280.5L796.5 265.1" stroke="#ffeb3b"/>
<path d="M31.5 282.6L31.5 298.7L32.5 302.9L32.5 281.9L33.5 281.1L33.5 307.5L34.5 300.7L34.5 283.6L35.5 286.1L35.5 313.3L36.5 301.0L36.5 283.1L37.5 283.0L37.5 299.7L38.5 314.3L38.5 285.8L39.5 282.3L39.5 313.4L40.5 304.8L40.5 284.6L41.5 287.0L41.5 306.5L42.5 321.4L42.5 283.5L43.5 280.6L43.5 300.1L44.5 310.7L44.5 281.6L45.5 284.4L45.5 306.0L46.5 299.7L46.5 288.7L47.5 282.6L47.5 319.6L48.5 305.5L48.5 283.6L49.5 283.7L49.5 309.3L50.5 299.3L50.5 283.4L51.5 287.4L51.5 318.1L52.5 308.8L52.5 287.0L53.5 284.3L53.5 314.0L54.5 298.4L54.5 282.9L55.5 283.8L55.5 301.3L56.5 298.3L56.5 282.7L57.5 282.5L57.5 298.4L58.5 311.3L58.5 285.7L59.5 280.7L59.5 315.5L60.5 314.6L60.5 284.3L61.5 284.2L61.5 298.1L62.5 316.5L62.5 282.0L63.5 285.0L63.5 306.9L64.5 303.2L64.5 283.7L65.5 282.7L65.5 305.9L66.5 300.8L66.5 282.6L67.5 279.7L67.5 300.3L68.5 299.3L68.5 283.4L69.5 286.6L69.5 297.6L70.5 304.9L70.5 282.0L71.5 278.1L71.5 303.7L72.5 297.4L72.5 283.1L73.5 285.1L73.5 311.8L74.5 311.0L74.5 281.8L75.5 286.4L75.5 305.8L76.5 306.8L76.5 282.1L77.5 284.9L77.5 307.1L78.5 297.1L78.5 283.0L79.5 286.8L79.5 307.8L80.5 307.0L80.5 286.4L81.5 282.6L81.5 303.7L82.5 299.1L82.5 287.3L83.5 282.7L83.5 298.8L84.5 297.3L84.5 286.2L85.5 284.8L85.5 319.5L86.5 303.3L86.5 284.8L87.5 282.2L87.5 305.0L88.5 304.9L88.5 282.3L89.5 285.8L89.5 315.9L90.5 297.7L90.5 283.0L91.5 283.5L91.5 303.7L92.5 298.5L92.5 287.4L93.5 287.1L93.5 299.9L94.5 297.0L94.5 282.1L95.5 282.8L95.5 300.9L96.5 312.0L96.5 281.8L97.5 287.4L97.5 300.8L98.5 301.6L98.5 280.8L99.5 287.3L99.5 303.8L100.5 305.8L100.5 286.7L101.5 282.0L101.5 299.6L102.5 310.3L102.5 285.4L103.5 287.5L103.5 297.5L104.5 308.6L104.5 282.3L105.5 287.7L105.5 303.0L106.5 315.4L106.5 282.9L107.5 287.7L107.5 305.6L108.5 299.1L108.5 283.5L109.5 282.1L109.5 319.9L110.5 310.5L110.5 285.5L111.5 285.9L111.5 317.9L112.5 302.3L112.5 283.4L113.5 281.6L113.5 297.3L114.5 303.8L114.5 286.5L115.5 284.4L115.5 306.8L116.5 300.8L116.5 283.6L117.5 281.7L117.5 307.2L118.5 302.3L118.5 281.5L119.5 283.2L119.5 311.6L120.5 297.6L120.5 282.7L121.5 287.7L121.5 300.9L122.5 297.7L122.5 282.0L123.5 281.8L123.5 298.5L124.5 305.9L124.5 284.3L125.5 283.0L125.5 309.2L126.5 298.2L126.5 283.0L127.5 283.0L127.5 302.8L128.5 309.8L128.5 282.4L129.5 286.3L129.5 318.2L130.5 299.7L130.5 287.6L131.5 284.4L131.5 298.7L132.5 316.5L132.5 286.7L133.5 286.6L133.5 299.0L134.5 298.9L134.5 288.9L135.5 286.6L135.5 308.0L136.5 312.3L136.5 285.0L137.5 281.9L137.5 303.0L138.5 298.8L138.5 283.8L139.5 282.2L139.5 301.9L140.5 301.5L140.5 287.6L141.5 285.2L141.5 309.6L142.5 308.6L142.5 285.0L143.5 282.6L143.5 298.9L144.5 299.6L144.5 283.5L145.5 280.1L145.5 305.8L146.5 304.1L146.5 282.7L147.5 284.4L147.5 298.5L148.5 315.0L148.5 286.5L149.5 283.6L149.5 308.6L150.5 309.0L150.5 285.5L151.5 280.8L151.5 306.7L152.5 304.0L152.5 287.0L153.5 283.4L153.5 303.1L154.5 310.8L154.5 279.2L155.5 286.3L155.5 298.2L156.5 298.1L156.5 288.1L157.5 286.9L157.5 313.2L158.5 302.3L158.5 285.2L159.5 286.0L159.5 309.8L160.5 310.6L160.5 285.5L161.5 281.5L161.5 297.6L162.5 303.3L162.5 280.1L163.5 282.6L163.5 303.6L164.5 310.8L164.5 285.9L165.5 280.7L165.5 297.3L166.5 300.0L166.5 281.7L167.5 283.0L167.5 300.3L168.5 303.7L168.5 278.2L169.5 284.2L169.5 301.8L170.5 306.5L170.5 279.5L171.5 282.0L171.5 297.0L172.5 297.3L172.5 283.1L173.5 280.1L173.5 311.9L174.5 300.6L174.5 283.3L175.5 279.8L175.5 296.8L176.5 298.2L176.5 281.0L177.5 287.3L177.5 312.5L178.5 309.6L178.5 281.3L179.5 287.3L179.5 302.8L180.5 307.2L180.5 280.5L181.5 282.3L181.5 297.9L182.5 299.5L182.5 287.8L183.5 285.1L183.5 297.8L184.5 304.4L184.5 282.6L185.5 280.7L185.5 298.3L186.5 314.9L186.5 285.9L187.5 287.9L187.5 298.9L188.5 304.2L188.5 283.0L189.5 282.7L189.5 307.9L190.5 305.7L190.5 284.3L191.5 286.2L191.5 315.8L192.5 303.4L192.5 279.9L193.5 282.1L193.5 302.7L194.5 301.8L194.5 287.1L195.5 286.2L195.5 297.8L196.5 297.1L196.5 283.1L197.5 281.1L197.5 296.9L198.5 303.8L198.5 281.3L199.5 282.7L199.5 299.9L200.5 296.8L200.5 282.3L201.5 279.4L201.5 309.3L202.5 296.6L202.5 280.8L203.5 281.8L203.5 296.4L204.5 296.3L204.5 281.1L205.5 281.7L205.5 296.2L206.5 296.2L206.5 283.5L207.5 286.2L207.5 303.2L208.5 300.8L208.5 280.4L209.5 277.7L209.5 301.2L210.5 303.4L210.5 281.6L211.5 281.7L211.5 299.2L212.5 304.2L212.5 280.9L213.5 282.2L213.5 297.0L214.5 297.9L214.5 282.5L215.5 280.7L215.5 309.0L216.5 312.1L216.5 287.0L217.5 286.9L217.5 298.4L218.5 296.8L218.5 285.1L219.5 282.5L219.5 296.9L220.5 304.4L220.5 287.1L221.5 286.1L221.5 306.4L222.5 304.9L222.5 287.5L223.5 282.1L223.5 302.9L224.5 297.6L224.5 281.9L225.5 282.5L225.5 297.8L226.5 297.9L226.5 282.2L227.5 282.9L227.5 307.4L228.5 302.2L228.5 280.3L229.5 283.6L229.5 307.4L230.5 297.7L230.5 287.7L231.5 281.4L231.5 297.6L232.5 306.4L232.5 279.9L233.5 287.3L233.5 313.1L234.5 306.0L234.5 282.8L235.5 287.8L235.5 297.8L236.5 300.4L236.5 282.8L237.5 281.7L237.5 312.9L238.5 302.4L238.5 288.1L239.5 282.8L239.5 298.8L240.5 298.3L240.5 283.6L241.5 280.6L241.5 297.9L242.5 297.7L242.5 282.8L243.5 287.5L243.5 319.9L244.5 297.5L244.5 286.1L245.5 279.4L245.5 298.4L246.5 297.6L246.5 281.8L247.5 285.6L247.5 311.5L248.5 297.5L248.5 281.2L249.5 281.3L249.5 307.7L250.5 311.1L250.5 286.6L251.5 286.4L251.5 297.3L252.5 297.0L252.5 282.3L253.5 279.6L253.5 300.7L254.5 306.9L254.5 286.5L255.5 282.6L255.5 297.0L256.5 297.0L256.5 282.7L257.5 283.8L257.5 297.0L258.5 304.5L258.5 282.6L259.5 281.9L259.5 303.3L260.5 297.2L260.5 283.1L261.5 281.7L261.5 318.3L262.5 298.4L262.5 283.3L263.5 285.2L263.5 300.0L264.5 298.0L264.5 286.5L265.5 287.6L265.5 309.4L266.5 300.2L266.5 287.3L267.5 282.3L267.5 307.5L268.5 313.4L268.5 281.7L269.5 282.3L269.5 322.0L270.5 298.1L270.5 288.1L271.5 283.3L271.5 298.0L272.5 297.9L272.5 283.6L273.5 285.0L273.5 297.9L274.5 311.3L274.5 285.0L275.5 287.8L275.5 297.8L276.5 298.1L276.5 280.0L277.5 283.2L277.5 299.5L278.5 299.2L278.5 283.8L279.5 283.0L279.5 304.2L280.5 304.4L280.5 285.7L281.5 283.0L281.5 298.0L282.5 299.1L282.5 283.6L283.5 282.3L283.5 323.3L284.5 300.5L284.5 281.9L285.5 285.3L285.5 304.4L286.5 298.4L286.5 282.7L287.5 287.2L287.5 298.2L288.5 298.1L288.5 283.0L289.5 283.2L289.5 305.3L290.5 301.5L290.5 280.6L291.5 288.0L291.5 302.5L292.5 298.4L292.5 286.5L293.5 283.9L293.5 299.4L294.5 297.7L294.5 285.2L295.5 283.0L295.5 297.6L296.5 299.2L296.5 281.3L297.5 287.7L297.5 297.7L298.5 300.4L298.5 287.8L299.5 283.1L299.5 298.5L300.5 309.4L300.5 282.8L301.5 285.6L301.5 298.5L302.5 316.6L302.5 287.1L303.5 282.9L303.5 297.7L304.5 307.6L304.5 281.8L305.5 279.2L305.5 300.5L306.5 314.8L306.5 287.9L307.5 286.0L307.5 299.5L308.5 315.0L308.5 286.5L309.5 284.1L309.5 301.0L310.5 298.9L310.5 283.1L311.5 283.6L311.5 301.4L312.5 304.2L312.5 282.6L313.5 284.0L313.5 311.2L314.5 306.1L314.5 283.4L315.5 284.3L315.5 305.8L316.5 302.5L316.5 283.1L317.5 284.8L317.5 304.2L318.5 307.3L318.5 288.0L319.5 279.8L319.5 297.8L320.5 300.5L320.5 278.3L321.5 282.6L321.5 316.5L322.5 303.3L322.5 282.9L323.5 284.4L323.5 301.5L324.5 300.9L324.5 283.8L325.5 284.6L325.5 297.8L326.5 315.8L326.5 287.4L327.5 283.8L327.5 297.8L328.5 304.3L328.5 284.5L329.5 282.1L329.5 297.8L330.5 299.4L330.5 287.6L331.5 283.6L331.5 312.4L332.5 317.4L332.5 287.6L333.5 283.3L333.5 302.7L334.5 302.3L334.5 282.7L335.5 282.8L335.5 302.9L336.5 299.6L336.5 283.2L337.5 278.5L337.5 297.5L338.5 307.8L338.5 282.3L339.5 286.1L339.5 314.5L340.5 306.4L340.5 287.4L341.5 282.2L341.5 301.9L342.5 309.6L342.5 282.9L343.5 287.5L343.5 298.0L344.5 314.3L344.5 283.8L345.5 281.5L345.5 301.8L346.5 303.7L346.5 284.4L347.5 281.3L347.5 298.4L348.5 302.9L348.5 287.3L349.5 278.2L349.5 297.4L350.5 314.0L350.5 282.1L351.5 283.2L351.5 301.1L352.5 297.4L352.5 287.4L353.5 283.5L353.5 298.8L354.5 303.1L354.5 280.2L355.5 282.5L355.5 297.7L356.5 297.7L356.5 280.9L357.5 281.0L357.5 297.8L358.5 297.8L358.5 282.3L359.5 282.0L359.5 297.6L360.5 309.1L360.5 287.3L361.5 287.6L361.5 316.7L362.5 305.3L362.5 282.8L363.5 284.7L363.5 298.7L364.5 299.6L364.5 283.5L365.5 282.6L365.5 297.4L366.5 303.3L366.5 287.4L367.5 287.5L367.5 297.5L368.5 313.2L368.5 284.6L369.5 280.5L369.5 310.9L370.5 309.8L370.5 280.9L371.5 287.5L371.5 300.4L372.5 311.4L372.5 282.4L373.5 287.2L373.5 297.6L374.5 300.8L374.5 281.6L375.5 283.0L375.5 311.6L376.5 297.8L376.5 283.3L377.5 287.6L377.5 306.8L378.5 314.4L378.5 282.8L379.5 283.2L379.5 301.6L380.5 297.7L380.5 282.5L381.5 286.6L381.5 304.5L382.5 299.4L382.5 283.2L383.5 284.3L383.5 312.1L384.5 304.3L384.5 279.7L385.5 285.1L385.5 298.1L386.5 298.0L386.5 285.5L387.5 283.5L387.5 298.6L388.5 298.0L388.5 283.0L389.5 284.7L389.5 298.4L390.5 312.2L390.5 283.7L391.5 282.2L391.5 300.9L392.5 309.2L392.5 281.7L393.5 281.6L393.5 298.4L394.5 309.8L394.5 283.1L395.5 282.2L395.5 298.2L396.5 306.3L396.5 282.4L397.5 284.4L397.5 298.3L398.5 307.8L398.5 287.2L399.5 281.2L399.5 298.1L400.5 299.4L400.5 282.3L401.5 283.0L401.5 314.3L402.5 303.7L402.5 285.0L403.5 283.6L403.5 311.9L404.5 299.7L404.5 280.5L405.5 284.8L405.5 304.3L406.5 303.8L406.5 283.2L407.5 283.3L407.5 299.1" stroke="#2196f3"/>
<path d="M407.5 299.1L408.05 291.3L408.13 283.4L408.21 304.7L408.30 301.8L408.38 298.9L408.46 293.5L408.55 281.7L408.63 282.8L408.71 277.6L408.80 272.4L408.88 267.4L408.96 262.4L409.05 257.5L409.13 252.7L409.21 247.9L409.30 243.2L409.38 238.6L409.46 234.1L409.55 229.7L409.63 225.3L409.71 221.0L409.80 216.8L409.88 212.7L409.96 208.6L410.05 204.6L410.13 200.7L410.21 196.9L410.30 193.1L410.38 189.5L410.46 185.9L410.55 182.3L410.63 178.9L410.71 175.5L410.79 172.3L410.88 169.0L410.96 165.9L411.04 162.9L411.13 159.9L411.21 157.0L411.29 154.2L411.38 151.4L411.46 148.7L411.54 146.1L411.63 143.6L411.71 141.2L411.79 138.8L411.88 136.5L411.96 134.3L412.04 132.2L412.13 130.2L412.21 128.2L412.29 126.3L412.38 124.5L412.46 122.7L412.54 121.1L412.63 119.5L412.71 118.0L412.79 116.5L412.88 115.2L412.96 113.9L413.04 112.7L413.13 111.5L413.21 110.5L413.29 109.5L413.38 108.6L413.46 107.8L413.54 107.1L413.63 106.4L413.71 105.8L413.79 105.3L413.88 104.9L413.96 104.5L414.04 104.2L414.12 104.0L414.21 103.9L414.29 103.9L414.37 103.9L414.46 104.0L414.54 104.2L414.62 104.5L414.71 104.8L414.79 105.2L414.87 105.7L414.96 106.3L415.04 106.9L415.12 107.7L415.21 108.5L415.29 109.3L415.37 110.3L415.46 111.3L415.54 112.4L415.62 113.6L415.71 114.9L415.79 116.2L415.87 117.6L415.96 119.1L416.04 120.7L416.12 122.4L416.21 124.1L416.29 125.9L416.37 127.8L416.46 129.7L416.54 131.8L416.62 133.9L416.71 136.1L416.79 138.4L416.87 140.7L416.96 143.1L417.04 145.6L417.12 148.2L417.21 150.8L417.29 153.6L417.37 156.4L417.45 159.3L417.54 162.2L417.62 165.3L417.70 168.4L417.79 171.6L417.87 174.9L417.95 178.2L418.04 181.6L418.12 185.1L418.20 188.7L418.29 192.4L418.37 196.1L418.45 199.9L418.54 203.8L418.62 207.8L418.70 211.8L418.79 215.9L418.87 220.1L418.95 224.4L419.04 228.8L419.12 233.2L419.20 237.7L419.29 242.3L419.37 246.9L419.45 251.7L419.54 256.5L419.62 261.4L419.70 266.3L419.79 271.4L419.87 276.5L419.95 281.7L420.04 287.0L420.12 292.3L420.20 297.1L420.29 285.8L420.37 308.9L420.45 289.3L420.53 280.9L420.62 294.3L420.70 293.6L420.78 282.1L420.87 300.5L420.95 285.8" stroke="#2196f3" stroke-width="0.95"/>
<path d="M420.95 285.8L421.5 304.0L421.5 283.2L422.5 280.7L422.5 305.3L423.5 297.7L423.5 279.8L424.5 287.6L424.5 307.2L425.5 297.7L425.5 283.2L426.5 287.6L426.5 297.6L427.5 300.9L427.5 281.2L428.5 283.4L428.5 297.5L429.5 297.5L429.5 285.3L430.5 281.4L430.5 300.1L431.5 303.2L431.5 282.4L432.5 281.9L432.5 298.0L433.5 299.9L433.5 283.9L434.5 286.7L434.5 297.7L435.5 298.1L435.5 285.8L436.5 282.5L436.5 305.1L437.5 306.7L437.5 282.5L438.5 286.9L438.5 308.7L439.5 307.0L439.5 282.5L440.5 283.3L440.5 300.2L441.5 308.4L441.5 282.7L442.5 287.4L442.5 304.2L443.5 298.6L443.5 283.3L444.5 287.2L444.5 298.5L445.5 309.9L445.5 281.2L446.5 281.4L446.5 305.7L447.5 297.7L447.5 282.0L448.5 282.5L448.5 310.3L449.5 306.6L449.5 283.2L450.5 281.0L450.5 299.1L451.5 305.9L451.5 284.3L452.5 287.0L452.5 301.9L453.5 297.2L453.5 282.3L454.5 284.1L454.5 297.8L455.5 297.0L455.5 282.5L456.5 282.2L456.5 306.2L457.5 297.7L457.5 282.4L458.5 287.1L458.5 307.7L459.5 302.8L459.5 282.9L460.5 282.0L460.5 318.3L461.5 300.9L461.5 284.5L462.5 282.0L462.5 300.1L463.5 308.1L463.5 284.4L464.5 285.9L464.5 308.0L465.5 303.0L465.5 278.7L466.5 285.0L466.5 314.2L467.5 305.4L467.5 282.7L468.5 283.0L468.5 305.2L469.5 311.4L469.5 285.9L470.5 282.7L470.5 312.5L471.5 297.7L471.5 285.6L472.5 282.4L472.5 307.1L473.5 307.9L473.5 281.4L474.5 287.9L474.5 305.3L475.5 300.7L475.5 280.4L476.5 284.2L476.5 304.9L477.5 298.0L477.5 282.6L478.5 288.1L478.5 298.1L479.5 317.4L479.5 283.2L480.5 282.5L480.5 308.5L481.5 298.0L481.5 288.0L482.5 286.2L482.5 304.3L483.5 311.4L483.5 283.7L484.5 283.5L484.5 302.5L485.5 302.3L485.5 282.1L486.5 288.0L486.5 300.7L487.5 298.2L487.5 281.1L488.5 283.3L488.5 298.1L489.5 305.9L489.5 284.8L490.5 282.6L490.5 304.2L491.5 300.6L491.5 282.8L492.5 282.8L492.5 300.1L493.5 297.9L493.5 280.9L494.5 288.0L494.5 298.0L495.5 304.3L495.5 286.6L496.5 282.8L496.5 307.6L497.5 298.3L497.5 280.8L498.5 284.1L498.5 298.1L499.5 320.1L499.5 284.2L500.5 285.4L500.5 316.1L501.5 297.5L501.5 280.3L502.5 283.6L502.5 300.5L503.5 307.8L503.5 282.3L504.5 279.7L504.5 307.6L505.5 301.6L505.5 284.4L506.5 281.4L506.5 314.3L507.5 312.1L507.5 283.6L508.5 283.6L508.5 298.0L509.5 306.5L509.5 284.7L510.5 282.5L510.5 307.2L511.5 312.6L511.5 282.1L512.5 282.3L512.5 305.1L513.5 296.5L513.5 283.1L514.5 279.5L514.5 297.5L515.5 296.5L515.5 282.7L516.5 283.7L516.5 328.3L517.5 296.7L517.5 280.4L518.5 280.1L518.5 298.0L519.5 305.2L519.5 280.9L520.5 281.0L520.5 301.3L521.5 302.2L521.5 287.1L522.5 281.8L522.5 299.1L523.5 297.0L523.5 282.7L524.5 281.8L524.5 311.2L525.5 302.6L525.5 287.1L526.5 282.5L526.5 315.8L527.5 297.4L527.5 279.9L528.5 282.2L528.5 316.5L529.5 304.8L529.5 280.4L530.5 282.8L530.5 310.9L531.5 316.3L531.5 279.8L532.5 282.1L532.5 297.4L533.5 298.4L533.5 283.3L534.5 281.0L534.5 303.8L535.5 299.0L535.5 287.8L536.5 283.1L536.5 308.8L537.5 312.1L537.5 282.1L538.5 285.0L538.5 308.2L539.5 301.7L539.5 281.3L540.5 280.6L540.5 301.4L541.5 316.8L541.5 281.5L542.5 283.8L542.5 303.4L543.5 297.6L543.5 283.9L544.5 283.7L544.5 307.2L545.5 307.4L545.5 287.0L546.5 282.5L546.5 298.0L547.5 307.6L547.5 284.6L548.5 287.2L548.5 308.9L549.5 297.7L549.5 283.0L550.5 282.7L550.5 313.4L551.5 302.7L551.5 278.8L552.5 287.0L552.5 297.0L553.5 301.6L553.5 286.2L554.5 281.5L554.5 302.2L555.5 313.9L555.5 282.1L556.5 287.4L556.5 301.7L557.5 299.5L557.5 279.4L558.5 287.3L558.5 297.3L559.5 311.1L559.5 282.6L560.5 285.9L560.5 303.5L561.5 297.0L561.5 287.0L562.5 283.8L562.5 314.7L563.5 298.5L563.5 280.8L564.5 280.3L564.5 296.9L565.5 302.3L565.5 283.2L566.5 283.3L566.5 297.8L567.5 309.7L567.5 282.4L568.5 283.7L568.5 303.8L569.5 307.1L569.5 279.2L570.5 279.7L570.5 301.8L571.5 302.7L571.5 285.7L572.5 285.9L572.5 302.3L573.5 304.0L573.5 284.6L574.5 284.1L574.5 298.2L575.5 298.1L575.5 282.4L576.5 283.6L576.5 298.8L577.5 300.4L577.5 280.9L578.5 284.2L578.5 304.9L579.5 310.9L579.5 281.1L580.5 282.2L580.5 310.1L581.5 303.9L581.5 287.7L582.5 282.2L582.5 297.7L583.5 309.5L583.5 283.8L584.5 282.5L584.5 301.2L585.5 306.3L585.5 285.5L586.5 285.6L586.5 305.2L587.5 316.5L587.5 281.4L588.5 285.7L588.5 299.3L589.5 303.9L589.5 287.6L590.5 284.8L590.5 298.7L591.5 305.0L591.5 287.6L592.5 281.5L592.5 297.6L593.5 315.9L593.5 281.0L594.5 281.8L594.5 300.6L595.5 304.2L595.5 283.3L596.5 283.0L596.5 297.6L597.5 298.5L597.5 282.3L598.5 287.5L598.5 301.7L599.5 302.0L599.5 286.4L600.5 286.7L600.5 307.0L601.5 300.6L601.5 285.0L602.5 281.3L602.5 314.2L603.5 305.9L603.5 287.0L604.5 281.5L604.5 299.3L605.5 307.2L605.5 287.3L606.5 283.2L606.5 296.9L607.5 303.7L607.5 280.3L608.5 282.0L608.5 310.5L609.5 318.3L609.5 282.8L610.5 284.2L610.5 300.0L611.5 301.1L611.5 287.2L612.5 281.9L612.5 297.1L613.5 307.8L613.5 280.1L614.5 282.5L614.5 309.2L615.5 297.0L615.5 285.0L616.5 281.9L616.5 301.7L617.5 305.6L617.5 280.7L618.5 284.4L618.5 302.9L619.5 304.1L619.5 282.9L620.5 282.5L620.5 300.5L621.5 301.7L621.5 280.8L622.5 284.9L622.5 300.2L623.5 307.0L623.5 287.5L624.5 284.9L624.5 297.4L625.5 298.9L625.5 282.6L626.5 282.3L626.5 297.5L627.5 304.4L627.5 285.3L628.5 287.4L628.5 315.3L629.5 297.3L629.5 282.4L630.5 278.4L630.5 300.0L631.5 297.1L631.5 282.7L632.5 281.3L632.5 296.9L633.5 308.7L633.5 280.7L634.5 282.8L634.5 298.9L635.5 311.8L635.5 283.5L636.5 281.3L636.5 303.6L637.5 309.3L637.5 281.0L638.5 283.7L638.5 302.3L639.5 300.9L639.5 281.6L640.5 287.8L640.5 297.9L641.5 299.4L641.5 283.0L642.5 283.6L642.5 297.9L643.5 304.4L643.5 282.9L644.5 282.0L644.5 306.2L645.5 297.8L645.5 283.4L646.5 284.3L646.5 314.4L647.5 297.9L647.5 282.7L648.5 283.2L648.5 299.6L649.5 297.9L649.5 284.7L650.5 286.0L650.5 299.7L651.5 307.9L651.5 285.6L652.5 287.2L652.5 302.3L653.5 310.8L653.5 281.1L654.5 283.9L654.5 313.2L655.5 315.6L655.5 281.4L656.5 285.1L656.5 304.7L657.5 298.4L657.5 287.1L658.5 282.3L658.5 300.2L659.5 306.9L659.5 282.5L660.5 281.1L660.5 297.9L661.5 297.6L661.5 282.8L662.5 281.3L662.5 303.6L663.5 300.9L663.5 284.8L664.5 283.7L664.5 298.8L665.5 314.7L665.5 281.6L666.5 284.3L666.5 300.6L667.5 298.2L667.5 283.5L668.5 288.1L668.5 298.3L669.5 307.9L669.5 282.5L670.5 283.9L670.5 326.5L671.5 304.0L671.5 288.1L672.5 281.5L672.5 309.3L673.5 303.5L673.5 286.9L674.5 284.1L674.5 299.3L675.5 303.0L675.5 284.5L676.5 287.6L676.5 302.0L677.5 305.3L677.5 279.9L678.5 282.9L678.5 316.3L679.5 302.6L679.5 282.4L680.5 279.5L680.5 297.8L681.5 303.2L681.5 281.1L682.5 283.4L682.5 304.8L683.5 306.6L683.5 282.9L684.5 281.6L684.5 307.2L685.5 305.4L685.5 287.8L686.5 287.4L686.5 300.9L687.5 300.7L687.5 282.8L688.5 284.5L688.5 305.8L689.5 302.8L689.5 284.6L690.5 286.4L690.5 298.6L691.5 298.5L691.5 288.5L692.5 283.5L692.5 311.4L693.5 303.2L693.5 283.7L694.5 285.9L694.5 303.5L695.5 301.7L695.5 282.4L696.5 284.9L696.5 298.9L697.5 303.4L697.5 283.8L698.5 288.2L698.5 302.1L699.5 308.8L699.5 284.0L700.5 280.7L700.5 298.0L701.5 299.2L701.5 283.9L702.5 286.5L702.5 300.2L703.5 302.6L703.5 286.1L704.5 285.0L704.5 298.2L705.5 311.7L705.5 288.3L706.5 285.0L706.5 302.9L707.5 313.0L707.5 283.2L708.5 284.1L708.5 305.4L709.5 298.4L709.5 285.4L710.5 281.9L710.5 305.1L711.5 302.3L711.5 288.1L712.5 276.8L712.5 308.6L713.5 298.6L713.5 288.2L714.5 279.5L714.5 307.7L715.5 310.6L715.5 284.6L716.5 284.0L716.5 298.1L717.5 298.2L717.5 286.7L718.5 286.6L718.5 298.7L719.5 309.2L719.5 287.9L720.5 287.7L720.5 297.7L721.5 304.4L721.5 282.8L722.5 282.6L722.5 309.5L723.5 303.7L723.5 285.6L724.5 281.0L724.5 301.8L725.5 298.5L725.5 283.7L726.5 286.1L726.5 302.4L727.5 307.1L727.5 282.5L728.5 283.9L728.5 297.7L729.5 304.4L729.5 285.6L730.5 282.9L730.5 304.8L731.5 304.4L731.5 287.0L732.5 285.2L732.5 310.6L733.5 303.9L733.5 282.8L734.5 284.4L734.5 297.9L735.5 304.7L735.5 285.0L736.5 283.1L736.5 298.3L737.5 316.9L737.5 283.4L738.5 287.4L738.5 301.9L739.5 309.9L739.5 281.3L740.5 279.8L740.5 307.0L741.5 301.4L741.5 287.9L742.5 283.3L742.5 315.6L743.5 302.1L743.5 283.8L744.5 284.6L744.5 310.6L745.5 305.2L745.5 285.2L746.5 284.4L746.5 298.0L747.5 299.0L747.5 283.5L748.5 285.6L748.5 310.0L749.5 301.0L749.5 283.0L750.5 288.1L750.5 310.5L751.5 305.1L751.5 279.9L752.5 286.8L752.5 312.7L753.5 304.9L753.5 284.8L754.5 283.9L754.5 311.1L755.5 298.6L755.5 288.6L756.5 282.9L756.5 298.4L757.5 306.9L757.5 284.9L758.5 282.1L758.5 303.4L759.5 299.6L759.5 280.1L760.5 285.3L760.5 311.8L761.5 298.1L761.5 282.8L762.5 284.1L762.5 298.2L763.5 298.9L763.5 285.0L764.5 279.6L764.5 305.5L765.5 305.1L765.5 284.5L766.5 284.3L766.5 308.2L767.5 303.0L767.5 283.3L768.5 283.1L768.5 314.4L769.5 302.1L769.5 282.7L770.5 285.6L770.5 305.5L771.5 297.0L771.5 281.2L772.5 281.6L772.5 297.2L773.5 297.1L773.5 283.0L774.5 281.9L774.5 307.3L775.5 302.7L775.5 284.0L776.5 286.1L776.5 297.4L777.5 314.6L777.5 281.5L778.5 282.3L778.5 297.1L779.5 297.0L779.5 286.3L780.5 280.8L780.5 297.0L781.5 296.9L781.5 282.8L782.5 282.6L782.5 313.7L783.5 305.8L783.5 281.6L784.5 281.3L784.5 296.7L785.5 299.1L785.5 279.1L786.5 279.3L786.5 299.7L787.5 296.3L787.5 280.8L788.5 281.0L788.5 304.9L789.5 321.5L789.5 280.7L790.5 280.7L790.5 296.2L791.5 298.4L791.5 280.4L792.5 280.1L792.5 307.5L793.5 300.6L793.5 278.1L794.5 286.1L794.5 296.2L795.5 296.0L795.5 282.2L796.5 285.9L796.5 298.8" stroke="#2196f3"/>
<path d="M31.5 292.4L31.5 314.3L32.5 313.4L32.5 292.9L33.5 298.2L33.5 330.2L34.5 316.9L34.5 293.6L35.5 297.5L35.5 328.5L36.5 313.1L36.5 292.9L37.5 297.1L37.5 309.6L38.5 309.7L38.5 292.7L39.5 296.0L39.5 311.6L40.5 324.1L40.5 295.3L41.5 292.2L41.5 316.1L42.5 312.0L42.5 295.3L43.5 299.9L43.5 323.4L44.5 315.4L44.5 297.1L45.5 294.4L45.5 311.9L46.5 309.8L46.5 298.6L47.5 294.8L47.5 309.7L48.5 314.6L48.5 293.1L49.5 297.4L49.5 309.5L50.5 331.5L50.5 293.6L51.5 295.7L51.5 309.6L52.5 310.3L52.5 293.1L53.5 293.9L53.5 309.6L54.5 312.5L54.5 295.4L55.5 294.8L55.5 313.7L56.5 332.3L56.5 298.0L57.5 298.9L57.5 311.8L58.5 312.1L58.5 293.8L59.5 291.7L59.5 318.7L60.5 316.1L60.5 294.7L61.5 296.8L61.5 309.8L62.5 324.9L62.5 294.4L63.5 298.3L63.5 323.3L64.5 311.5L64.5 299.8L65.5 294.6L65.5 326.7L66.5 319.3L66.5 294.7L67.5 295.2L67.5 314.1L68.5 319.9L68.5 293.9L69.5 292.6L69.5 321.5L70.5 316.4L70.5 296.6L71.5 293.3L71.5 319.2L72.5 313.9L72.5 289.9L73.5 298.3L73.5 330.6L74.5 318.6L74.5 295.7L75.5 295.8L75.5 313.5L76.5 321.0L76.5 298.3L77.5 296.3L77.5 309.8L78.5 318.3L78.5 294.8L79.5 294.6L79.5 316.9L80.5 310.0L80.5 300.0L81.5 298.1L81.5 312.4L82.5 310.1L82.5 292.4L83.5 300.0L83.5 310.0L84.5 320.9L84.5 295.5L85.5 296.0L85.5 313.2L86.5 310.0L86.5 297.9L87.5 296.5L87.5 313.9L88.5 315.5L88.5 292.1L89.5 294.6L89.5 312.3L90.5 327.3L90.5 294.6L91.5 295.8L91.5 324.0L92.5 310.1L92.5 299.8L93.5 294.6L93.5 310.1L94.5 321.3L94.5 297.1L95.5 293.6L95.5 310.1L96.5 322.3L96.5 295.0L97.5 295.1L97.5 322.5L98.5 311.1L98.5 292.8L99.5 298.3L99.5 332.1L100.5 311.2L100.5 294.8L101.5 292.9L101.5 323.7L102.5 310.4L102.5 294.9L103.5 295.8L103.5 318.6L104.5 319.8L104.5 300.6L105.5 293.7L105.5 317.6L106.5 317.6L106.5 294.2L107.5 294.2L107.5 320.4L108.5 316.5L108.5 295.1L109.5 292.9L109.5 311.3L110.5 316.4L110.5 299.1L111.5 298.7L111.5 325.0L112.5 321.5L112.5 299.7L113.5 295.8L113.5 320.6L114.5 313.0L114.5 299.2L115.5 295.1L115.5 311.7L116.5 331.9L116.5 298.0L117.5 298.6L117.5 333.3L118.5 312.0L118.5 299.1L119.5 295.7L119.5 320.2L120.5 311.7L120.5 294.5L121.5 297.0L121.5 311.5L122.5 320.3L122.5 300.3L123.5 295.6L123.5 311.6L124.5 334.3L124.5 296.0L125.5 294.4L125.5 327.9L126.5 314.3L126.5 300.2L127.5 298.3L127.5 319.5L128.5 310.7L128.5 295.5L129.5 294.7L129.5 313.9L130.5 320.3L130.5 296.1L131.5 300.7L131.5 323.5L132.5 320.5L132.5 296.2L133.5 298.7L133.5 323.1L134.5 320.5L134.5 293.7L135.5 298.6L135.5 310.7L136.5 330.8L136.5 295.8L137.5 294.1L137.5 322.5L138.5 314.1L138.5 296.1L139.5 294.7L139.5 310.0L140.5 317.9L140.5 292.7L141.5 297.2L141.5 325.7L142.5 326.5L142.5 292.9L143.5 294.7L143.5 310.7L144.5 320.6L144.5 299.1L145.5 289.1L145.5 329.6L146.5 324.7L146.5 294.7L147.5 291.7L147.5 312.3L148.5 311.9L148.5 294.7L149.5 289.8L149.5 315.8L150.5 326.7L150.5 291.2L151.5 293.1L151.5 311.5L152.5 321.7L152.5 293.1L153.5 295.5L153.5 312.6L154.5 308.7L154.5 295.1L155.5 290.9L155.5 310.3L156.5 334.6L156.5 292.1L157.5 298.6L157.5 321.2L158.5 314.6L158.5 295.3L159.5 294.5L159.5 308.9L160.5 310.1L160.5 292.2L161.5 293.9L161.5 312.6L162.5 312.3L162.5 295.4L163.5 294.3L163.5 310.4L164.5 317.3L164.5 299.0L165.5 298.9L165.5 308.9L166.5 315.0L166.5 293.2L167.5 292.3L167.5 309.7L168.5 326.4L168.5 294.2L169.5 293.6L169.5 311.9L170.5 311.1L170.5 292.0L171.5 298.0L171.5 312.3L172.5 333.3L172.5 293.4L173.5 294.1L173.5 315.9L174.5 311.6L174.5 294.0L175.5 292.6L175.5 323.0L176.5 309.0L176.5 295.9L177.5 293.5L177.5 315.5L178.5 309.1L178.5 293.8L179.5 298.0L179.5 319.1L180.5 311.3L180.5 296.4L181.5 296.4L181.5 315.4L182.5 322.7L182.5 296.7L183.5 296.3L183.5 336.2L184.5 316.1L184.5 293.8L185.5 298.0L185.5 324.6L186.5 323.9L186.5 294.3L187.5 295.2L187.5 309.7L188.5 309.8L188.5 298.0L189.5 293.5L189.5 315.7L190.5 323.7L190.5 292.1L191.5 295.2L191.5 310.3L192.5 329.3L192.5 293.2L193.5 295.6L193.5 310.5L194.5 314.1L194.5 295.7L195.5 292.0L195.5 310.9L196.5 317.5L196.5 295.3L197.5 300.1L197.5 331.6L198.5 309.9L198.5 298.8L199.5 293.9L199.5 309.9L200.5 310.0L200.5 298.6L201.5 295.6L201.5 310.6L202.5 311.8L202.5 293.0L203.5 296.8L203.5 312.4L204.5 310.4L204.5 293.5L205.5 295.0L205.5 324.4L206.5 310.5L206.5 300.5L207.5 299.2L207.5 322.3L208.5 310.9L208.5 298.8L209.5 297.5L209.5 325.3L210.5 310.5L210.5 300.5L211.5 299.1L211.5 326.0L212.5 310.7L212.5 294.3L213.5 300.6L213.5 317.3L214.5 321.0L214.5 294.9L215.5 295.0L215.5 313.8L216.5 312.9L216.5 295.2L217.5 295.9L217.5 319.8L218.5 311.4L218.5 295.4L219.5 300.0L219.5 318.0L220.5 323.4L220.5 295.6L221.5 299.1L221.5 326.2L222.5 319.4L222.5 296.5L223.5 296.3L223.5 320.2L224.5 311.0L224.5 298.7L225.5 296.5L225.5 322.1L226.5 337.3L226.5 299.0L227.5 295.5L227.5 320.4L228.5 327.7L228.5 294.3L229.5 295.2L229.5 312.9L230.5 327.8L230.5 293.5L231.5 292.8L231.5 316.1L232.5 318.4L232.5 294.6L233.5 301.0L233.5 312.1L234.5 312.8L234.5 293.4L235.5 295.4L235.5 312.7L236.5 323.1L236.5 292.5L237.5 299.0L237.5 313.7L238.5 314.0L238.5 300.6L239.5 295.9L239.5 315.8L240.5 311.8L240.5 296.1L241.5 300.5L241.5 321.1L242.5 320.3L242.5 299.1L243.5 298.0L243.5 310.2L244.5 330.5L244.5 293.4L245.5 294.0L245.5 316.8L246.5 326.2L246.5 298.1L247.5 296.1L247.5 309.8L248.5 320.8L248.5 298.9L249.5 295.2L249.5 315.1L250.5 315.4L250.5 299.7L251.5 293.1L251.5 309.7L252.5 311.1L252.5 294.0L253.5 299.6L253.5 327.1L254.5 320.5L254.5 294.7L255.5 293.8L255.5 317.3L256.5 318.3L256.5 292.7L257.5 299.5L257.5 312.8L258.5 309.4L258.5 293.5L259.5 299.2L259.5 309.2L260.5 331.4L260.5 295.5L261.5 291.5L261.5 321.9L262.5 312.3L262.5 299.2L263.5 292.5L263.5 309.2L264.5 309.4L264.5 291.9L265.5 299.1L265.5 319.9L266.5 316.9L266.5 296.2L267.5 296.5L267.5 320.7L268.5 318.4L268.5 294.7L269.5 296.0L269.5 315.1L270.5 309.1L270.5 293.7L271.5 291.8L271.5 314.2L272.5 314.1L272.5 292.7L273.5 294.3L273.5 314.1L274.5 312.3L274.5 296.6L275.5 299.2L275.5 312.1L276.5 323.0L276.5 292.4L277.5 292.8L277.5 328.5L278.5 317.0L278.5 293.7L279.5 294.1L279.5 335.5L280.5 331.2L280.5 295.4L281.5 296.2L281.5 317.4L282.5 319.5L282.5 296.6L283.5 295.5L283.5 309.2L284.5 321.8L284.5 293.8L285.5 293.1L285.5 320.7L286.5 308.8L286.5 291.4L287.5 292.7L287.5 319.8L288.5 320.9L288.5 295.8L289.5 293.9L289.5 330.6L290.5 311.0L290.5 293.9L291.5 292.2L291.5 314.0L292.5 334.5L292.5 292.1L293.5 295.1L293.5 320.9L294.5 328.7L294.5 293.1L295.5 297.1L295.5 313.9L296.5 310.4L296.5 299.4L297.5 297.1L297.5 315.9L298.5 320.0L298.5 297.3L299.5 294.2L299.5 309.4L300.5 329.0L300.5 296.2L301.5 299.4L301.5 326.7L302.5 310.6L302.5 296.2L303.5 292.8L303.5 318.7L304.5 317.5L304.5 294.9L305.5 294.1L305.5 333.8L306.5 325.2L306.5 295.1L307.5 292.6L307.5 322.3L308.5 309.5L308.5 293.2L309.5 294.6L309.5 311.5L310.5 314.9L310.5 299.7L311.5 299.0L311.5 312.9L312.5 332.2L312.5 297.5L313.5 294.3L313.5 319.7L314.5 310.0L314.5 294.7L315.5 291.5L315.5 315.2L316.5 326.7L316.5 294.9L317.5 290.8L317.5 312.3L318.5 311.7L318.5 296.5L319.5 300.5L319.5 315.3L320.5 319.2L320.5 295.0L321.5 297.5L321.5 327.0L322.5 310.5L322.5 298.0L323.5 296.6L323.5 316.6L324.5 310.5L324.5 293.4L325.5 295.9L325.5 323.4L326.5 316.4L326.5 296.5L327.5 297.7L327.5 318.3L328.5 314.9L328.5 300.5L329.5 294.0L329.5 313.7L330.5 325.3L330.5 296.3L331.5 294.9L331.5 314.6L332.5 316.2L332.5 300.3L333.5 296.7L333.5 321.7L334.5 326.9L334.5 299.8L335.5 295.2L335.5 324.5L336.5 316.4L336.5 295.7L337.5 298.6L337.5 325.8L338.5 316.4L338.5 298.0L339.5 300.7L339.5 310.7L340.5 326.8L340.5 300.9L341.5 292.4L341.5 310.7L342.5 315.9L342.5 294.1L343.5 294.2L343.5 310.4L344.5 326.7L344.5 300.2L345.5 294.5L345.5 312.6L346.5 311.5L346.5 293.0L347.5 295.2L347.5 310.3L348.5 310.0L348.5 295.8L349.5 292.7L349.5 310.0L350.5 310.2L350.5 296.3L351.5 293.2L351.5 327.8L352.5 315.9L352.5 294.8L353.5 294.4L353.5 309.8L354.5 318.1L354.5 295.7L355.5 293.4L355.5 309.9L356.5 332.6L356.5 297.8L357.5 299.4L357.5 320.7L358.5 313.1L358.5 293.7L359.5 297.0L359.5 309.5L360.5 308.7L360.5 293.9L361.5 298.5L361.5 323.1L362.5 308.2L362.5 292.4L363.5 294.5L363.5 321.1L364.5 312.8L364.5 290.4L365.5 294.9L365.5 322.5L366.5 313.2L366.5 293.9L367.5 295.0L367.5 323.3L368.5 309.0L368.5 290.1L369.5 293.9L369.5 308.3L370.5 317.4L370.5 293.0L371.5 294.4L371.5 315.0L372.5 318.7L372.5 290.5L373.5 296.7L373.5 308.9L374.5 318.3L374.5 294.4L375.5 291.5L375.5 315.1L376.5 308.1L376.5 291.6L377.5 295.5L377.5 320.1L378.5 313.6L378.5 297.5L379.5 291.0L379.5 308.5L380.5 320.4L380.5 293.9L381.5 292.3L381.5 325.9L382.5 321.2L382.5 292.3L383.5 297.2L383.5 308.0L384.5 322.0L384.5 289.7L385.5 291.2L385.5 335.9L386.5 307.9L386.5 293.2L387.5 297.9L387.5 331.8L388.5 317.6L388.5 295.1L389.5 294.0L389.5 323.3L390.5 318.8L390.5 292.5L391.5 294.4L391.5 313.5L392.5 312.2L392.5 292.7L393.5 293.7L393.5 313.0L394.5 321.1L394.5 298.9L395.5 299.1L395.5 318.0L396.5 323.6L396.5 294.0L397.5 294.6L397.5 329.8L398.5 320.7L398.5 293.0L399.5 299.1L399.5 325.2L400.5 312.0L400.5 298.8L401.5 297.4L401.5 322.1L402.5 316.9L402.5 292.5L403.5 292.3L403.5 309.5L404.5 309.6L404.5 293.9L405.5 297.6L405.5 326.4L406.5 310.0L406.5 293.6L407.5 300.2L407.5 314.1L408.5 321.1L408.5 298.5L409.5 294.4L409.5 317.3L410.5 315.0L410.5 295.5" stroke="#9f28b4"/>
<path d="M410.5 295.5L411.04 295.9L411.13 296.2L411.21 306.3L411.29 295.5L411.38 285.1L411.46 274.9L411.54 265.0L411.63 255.4L411.71 246.1L411.79 237.1L411.88 228.4L411.96 220.0L412.04 211.9L412.13 204.1L412.21 196.5L412.29 189.3L412.38 182.4L412.46 175.7L412.54 169.4L412.63 163.3L412.71 157.5L412.79 152.1L412.88 146.9L412.96 142.0L413.04 137.4L413.13 133.1L413.21 129.1L413.29 125.4L413.38 122.0L413.46 118.9L413.54 116.1L413.63 113.5L413.71 111.3L413.79 109.4L413.88 107.7L413.96 106.4L414.04 105.3L414.12 104.5L414.21 104.1L414.29 103.9L414.37 104.0L414.46 104.4L414.54 105.1L414.62 106.1L414.71 107.4L414.79 109.0L414.87 110.9L414.96 113.0L415.04 115.5L415.12 118.3L415.21 121.3L415.29 124.7L415.37 128.3L415.46 132.3L415.54 136.5L415.62 141.0L415.71 145.9L415.79 151.0L415.87 156.4L415.96 162.1L416.04 168.1L416.12 174.4L416.21 181.0L416.29 187.8L416.37 195.0L416.46 202.5L416.54 210.2L416.62 218.3L416.71 226.7L416.79 235.3L416.87 244.2L416.96 253.5L417.04 263.0L417.12 272.8L417.21 282.9L417.29 293.3L417.37 300.9L417.45 300.0L417.54 305.0L417.62 298.7L417.70 310.7L417.79 308.2L417.87 308.7L417.95 306.1" stroke="#9f28b4" stroke-width="0.95"/>
<path d="M417.95 306.1L418.5 298.0L418.5 323.2L419.5 323.2L419.5 297.1L420.5 300.4L420.5 324.1L421.5 310.6L421.5 292.4L422.5 295.4L422.5 314.0L423.5 314.7L423.5 300.4L424.5 300.4L424.5 327.8L425.5 319.1L425.5 296.6L426.5 293.4L426.5 317.7L427.5 331.3L427.5 295.0L428.5 299.1L428.5 314.8L429.5 330.4L429.5 296.0L430.5 299.9L430.5 330.4L431.5 313.5L431.5 297.7L432.5 299.9L432.5 315.8L433.5 323.2L433.5 294.1L434.5 295.2L434.5 319.3L435.5 322.7L435.5 295.8L436.5 291.2L436.5 311.8L437.5 313.7L437.5 296.8L438.5 294.7L438.5 318.9L439.5 309.7L439.5 294.3L440.5 297.5L440.5 315.6L441.5 326.0L441.5 298.4L442.5 296.3L442.5 310.5L443.5 309.5L443.5 298.0L444.5 299.5L444.5 312.0L445.5 318.1L445.5 297.0L446.5 299.0L446.5 332.8L447.5 313.0L447.5 292.8L448.5 292.5L448.5 327.6L449.5 316.8L449.5 295.0L450.5 292.6L450.5 317.8L451.5 309.1L451.5 296.3L452.5 292.9L452.5 311.3L453.5 314.6L453.5 296.6L454.5 298.1L454.5 312.0L455.5 327.9L455.5 294.4L456.5 296.2L456.5 329.0L457.5 313.2L457.5 294.3L458.5 296.2L458.5 316.8L459.5 321.0L459.5 293.9L460.5 294.2L460.5 339.8L461.5 322.2L461.5 294.4L462.5 294.4L462.5 322.1L463.5 327.2L463.5 298.5L464.5 293.3L464.5 311.8L465.5 312.4L465.5 297.3L466.5 298.7L466.5 310.0L467.5 316.0L467.5 298.3L468.5 297.0L468.5 322.3L469.5 314.0L469.5 293.1L470.5 297.1L470.5 312.3L471.5 321.2L471.5 298.2L472.5 299.2L472.5 324.7L473.5 319.6L473.5 298.7L474.5 295.9L474.5 322.9L475.5 318.0L475.5 297.5L476.5 299.2L476.5 314.9L477.5 325.0L477.5 299.0L478.5 291.4L478.5 317.2L479.5 310.6L479.5 296.0L480.5 293.1L480.5 309.1L481.5 315.4L481.5 297.3L482.5 290.0L482.5 312.9L483.5 311.4L483.5 297.2L484.5 294.8L484.5 309.2L485.5 323.2L485.5 292.3L486.5 294.8L486.5 314.3L487.5 319.1L487.5 295.1L488.5 293.9L488.5 320.4L489.5 327.6L489.5 299.5L490.5 298.3L490.5 321.3L491.5 312.8L491.5 297.1L492.5 293.1L492.5 320.5L493.5 309.3L493.5 294.3L494.5 294.2L494.5 314.6L495.5 320.9L495.5 295.4L496.5 294.7L496.5 309.1L497.5 314.6L497.5 293.5L498.5 298.8L498.5 308.8L499.5 308.8L499.5 290.3L500.5 293.5L500.5 333.7L501.5 316.1L501.5 298.5L502.5 294.2L502.5 314.2L503.5 319.8L503.5 295.1L504.5 299.4L504.5 309.4L505.5 310.2L505.5 294.6L506.5 293.6L506.5 310.6L507.5 318.4L507.5 299.0L508.5 296.5L508.5 321.8L509.5 312.7L509.5 291.5L510.5 297.3L510.5 314.7L511.5 314.3L511.5 294.7L512.5 295.9L512.5 309.9L513.5 311.8L513.5 294.6L514.5 300.3L514.5 312.7L515.5 319.7L515.5 296.9L516.5 295.5L516.5 329.1L517.5 330.2L517.5 297.6L518.5 293.9L518.5 333.5L519.5 315.1L519.5 298.6L520.5 292.5L520.5 310.3L521.5 313.6L521.5 295.2L522.5 296.1L522.5 316.5L523.5 312.8L523.5 296.5L524.5 292.7L524.5 317.9L525.5 322.5L525.5 295.4L526.5 295.5L526.5 311.9L527.5 313.1L527.5 292.2L528.5 297.5L528.5 328.4L529.5 312.0L529.5 294.5L530.5 296.1L530.5 330.7L531.5 317.1L531.5 293.6L532.5 300.0L532.5 318.4L533.5 320.1L533.5 300.1L534.5 300.0L534.5 310.0L535.5 310.0L535.5 299.9L536.5 294.6L536.5 317.2L537.5 322.8L537.5 296.4L538.5 293.4L538.5 309.5L539.5 311.0L539.5 294.7L540.5 292.5L540.5 315.9L541.5 311.9L541.5 292.8L542.5 294.6L542.5 320.6L543.5 322.7L543.5 296.8L544.5 292.6L544.5 309.7L545.5 319.3L545.5 298.2L546.5 295.3L546.5 333.6L547.5 322.5L547.5 293.8L548.5 299.6L548.5 317.6L549.5 316.5L549.5 292.5L550.5 295.3L550.5 329.4L551.5 318.3L551.5 298.1L552.5 299.6L552.5 310.7L553.5 318.0L553.5 297.8L554.5 293.4L554.5 309.6L555.5 313.6L555.5 299.0L556.5 294.1L556.5 309.6L557.5 318.6L557.5 297.3L558.5 294.9L558.5 309.9L559.5 339.7L559.5 295.0L560.5 294.3L560.5 319.7L561.5 312.6L561.5 295.9L562.5 294.1L562.5 310.0L563.5 328.7L563.5 295.6L564.5 295.1L564.5 326.3L565.5 309.7L565.5 295.0L566.5 294.7L566.5 309.9L567.5 310.1L567.5 293.4L568.5 296.5L568.5 320.2L569.5 336.1L569.5 296.5L570.5 299.9L570.5 310.4L571.5 311.3L571.5 297.6L572.5 293.7L572.5 310.5L573.5 314.6L573.5 292.5L574.5 293.6L574.5 313.3L575.5 310.4L575.5 300.4L576.5 293.1L576.5 318.3L577.5 318.7L577.5 292.9L578.5 299.5L578.5 312.5L579.5 310.2L579.5 293.6L580.5 293.3L580.5 310.3L581.5 318.5L581.5 300.2L582.5 295.4L582.5 318.0L583.5 318.3L583.5 295.8L584.5 295.2L584.5 318.1L585.5 310.2L585.5 297.7L586.5 295.2L586.5 315.6L587.5 321.3L587.5 294.4L588.5 299.0L588.5 312.3L589.5 316.7L589.5 295.1L590.5 298.0L590.5 328.9L591.5 315.1L591.5 293.2L592.5 299.7L592.5 316.9L593.5 326.0L593.5 295.0L594.5 294.0L594.5 333.0L595.5 325.9L595.5 296.6L596.5 292.9L596.5 312.2L597.5 318.0L597.5 295.4L598.5 295.7L598.5 311.4L599.5 309.9L599.5 299.5L600.5 294.5L600.5 316.6L601.5 322.4L601.5 295.1L602.5 292.9L602.5 324.5L603.5 309.8L603.5 295.0L604.5 299.8L604.5 320.8L605.5 310.8L605.5 294.2L606.5 294.8L606.5 315.4L607.5 331.7L607.5 296.3L608.5 296.3L608.5 323.0L609.5 317.5L609.5 294.2L610.5 296.2L610.5 314.4L611.5 316.0L611.5 294.3L612.5 299.8L612.5 311.6L613.5 314.7L613.5 293.0L614.5 293.5L614.5 317.3L615.5 311.6L615.5 296.8L616.5 296.2L616.5 310.8L617.5 318.3L617.5 298.0L618.5 298.7L618.5 314.2L619.5 310.6L619.5 293.5L620.5 299.3L620.5 313.4L621.5 323.1L621.5 295.2L622.5 292.9L622.5 319.3L623.5 324.1L623.5 291.3L624.5 299.7L624.5 332.7L625.5 320.4L625.5 296.9L626.5 294.1L626.5 314.2L627.5 321.4L627.5 295.9L628.5 296.7L628.5 318.1L629.5 324.7L629.5 294.5L630.5 293.4L630.5 314.9L631.5 314.9L631.5 294.7L632.5 295.2L632.5 333.4L633.5 317.3L633.5 292.4L634.5 294.4L634.5 320.1L635.5 315.2L635.5 297.7L636.5 292.4L636.5 319.4L637.5 322.3L637.5 295.4L638.5 290.4L638.5 316.0L639.5 314.3L639.5 295.7L640.5 298.5L640.5 315.0L641.5 309.1L641.5 297.9L642.5 293.8L642.5 317.2L643.5 326.2L643.5 296.1L644.5 294.9L644.5 313.6L645.5 312.2L645.5 294.6L646.5 296.9L646.5 329.1L647.5 319.2L647.5 299.0L648.5 297.7L648.5 309.1L649.5 309.4L649.5 292.0L650.5 292.7L650.5 329.8L651.5 319.5L651.5 295.2L652.5 299.8L652.5 317.6L653.5 318.7L653.5 294.2L654.5 291.1L654.5 314.1L655.5 311.3L655.5 295.5L656.5 297.5L656.5 321.5L657.5 312.8L657.5 294.5L658.5 296.8L658.5 310.2L659.5 323.0L659.5 295.6L660.5 293.7L660.5 310.1L661.5 310.1L661.5 298.4L662.5 295.8L662.5 318.3L663.5 314.1L663.5 291.8L664.5 298.5L664.5 319.7L665.5 316.5L665.5 298.9L666.5 295.9L666.5 317.0L667.5 316.1L667.5 296.7L668.5 296.9L668.5 331.9L669.5 318.3L669.5 298.4L670.5 296.5L670.5 324.4L671.5 327.4L671.5 296.6L672.5 295.5L672.5 310.9L673.5 319.1L673.5 301.1L674.5 298.7L674.5 323.5L675.5 311.5L675.5 294.5L676.5 298.5L676.5 311.5L677.5 313.1L677.5 297.8L678.5 297.3L678.5 322.4L679.5 319.1L679.5 298.5L680.5 296.8L680.5 311.4L681.5 315.3L681.5 298.1L682.5 295.9L682.5 316.1L683.5 320.9L683.5 298.4L684.5 300.2L684.5 311.7L685.5 317.5L685.5 296.4L686.5 297.1L686.5 314.9L687.5 315.4L687.5 301.2L688.5 295.1L688.5 311.0L689.5 314.0L689.5 295.6L690.5 295.0L690.5 322.7L691.5 310.9L691.5 295.7L692.5 293.5L692.5 312.8L693.5 311.2L693.5 297.1L694.5 292.7L694.5 315.3L695.5 324.5L695.5 299.9L696.5 295.2L696.5 316.8L697.5 315.3L697.5 299.9L698.5 291.8L698.5 315.1L699.5 315.6L699.5 298.4L700.5 295.4L700.5 337.7L701.5 313.9L701.5 299.5L702.5 291.9L702.5 309.8L703.5 319.1L703.5 294.1L704.5 292.2L704.5 317.2L705.5 317.0L705.5 295.0L706.5 294.9L706.5 327.7L707.5 317.5L707.5 294.1L708.5 296.5L708.5 313.1L709.5 310.1L709.5 295.3L710.5 298.2L710.5 327.0L711.5 317.8L711.5 294.7L712.5 296.5L712.5 316.7L713.5 330.9L713.5 292.8L714.5 294.5L714.5 308.9L715.5 314.1L715.5 298.7L716.5 292.7L716.5 311.9L717.5 310.9L717.5 292.2L718.5 298.5L718.5 309.4L719.5 314.8L719.5 298.0L720.5 296.9L720.5 318.4L721.5 323.6L721.5 298.8L722.5 293.5L722.5 308.9L723.5 318.4L723.5 293.8L724.5 293.6L724.5 308.6L725.5 335.1L725.5 295.3L726.5 297.8L726.5 311.4L727.5 308.7L727.5 298.7L728.5 293.8L728.5 321.4L729.5 317.2L729.5 295.6L730.5 295.9L730.5 321.6L731.5 310.8L731.5 299.0L732.5 298.3L732.5 309.8L733.5 318.4L733.5 298.2L734.5 291.7L734.5 315.0L735.5 310.9L735.5 291.6L736.5 296.5L736.5 331.6L737.5 309.7L737.5 294.1L738.5 293.2L738.5 312.8L739.5 311.1L739.5 292.9L740.5 299.5L740.5 316.3L741.5 309.5L741.5 294.5L742.5 291.6L742.5 319.1L743.5 317.7L743.5 299.1L744.5 299.7L744.5 309.7L745.5 317.4L745.5 294.4L746.5 292.5L746.5 310.0L747.5 310.0L747.5 295.9L748.5 295.1L748.5 323.0L749.5 318.7L749.5 299.8L750.5 297.2L750.5 309.8L751.5 336.4L751.5 292.1L752.5 294.4L752.5 311.1L753.5 322.2L753.5 291.1L754.5 293.9L754.5 311.2L755.5 316.4L755.5 294.9L756.5 295.6L756.5 309.7L757.5 309.8L757.5 296.5L758.5 295.1L758.5 316.1L759.5 313.1L759.5 296.1L760.5 294.1L760.5 319.1L761.5 313.1L761.5 294.6L762.5 295.0L762.5 310.4L763.5 322.2L763.5 296.5L764.5 294.1L764.5 320.8L765.5 320.1L765.5 294.0L766.5 293.5L766.5 312.9L767.5 317.7L767.5 299.9L768.5 293.0L768.5 316.4L769.5 315.5L769.5 300.2L770.5 295.9L770.5 310.2L771.5 310.1L771.5 294.2L772.5 295.9L772.5 318.2L773.5 313.9L773.5 295.8L774.5 293.7L774.5 309.8L775.5 312.8L775.5 289.0L776.5 293.6L776.5 316.6L777.5 311.6L777.5 299.5L778.5 294.0L778.5 309.7L779.5 315.3L779.5 295.9L780.5 292.6L780.5 317.0L781.5 309.8L781.5 292.7L782.5 299.8L782.5 309.8L783.5 321.7L783.5 294.5L784.5 294.1L784.5 312.7L785.5 330.8L785.5 299.7L786.5 293.9L786.5 309.6L787.5 322.4L787.5 295.6L788.5 295.7L788.5 314.8L789.5 309.4L789.5 298.5L790.5 292.3L790.5 309.5L791.5 309.4L791.5 297.1L792.5 299.3L792.5 309.9L793.5 316.0L793.5 294.6L794.5 292.3L794.5 330.0L795.5 312.7L795.5 291.9L796.5 297.6L796.5 321.5" stroke="#9f28b4"/>
<path d="M31.5 317.9L31.5 346.0L32.5 336.8L32.5 318.5L33.5 316.9L33.5 339.3L34.5 346.1L34.5 317.1L35.5 319.3L35.5 335.0L36.5 363.4L36.5 316.4L37.5 319.4L37.5 336.6L38.5 367.9L38.5 318.0L39.5 319.7L39.5 344.0L40.5 339.1L40.5 317.1L41.5 319.0L41.5 335.0L42.5 340.5L42.5 319.6L43.5 315.1L43.5 338.2L44.5 337.7L44.5 319.0L45.5 317.8L45.5 340.7L46.5 357.6L46.5 315.7L47.5 317.1L47.5 335.0L48.5 338.2L48.5 323.1L49.5 323.2L49.5 342.3L50.5 356.6L50.5 316.3L51.5 318.8L51.5 341.4L52.5 335.0L52.5 319.3L53.5 320.0L53.5 335.3L54.5 349.3L54.5 317.0L55.5 319.9L55.5 340.4L56.5 361.4L56.5 319.6L57.5 318.4L57.5 345.1L58.5 340.0L58.5 318.0L59.5 320.0L59.5 335.0L60.5 344.5L60.5 318.2L61.5 321.0L61.5 350.4L62.5 338.6L62.5 321.6L63.5 318.1L63.5 348.1L64.5 353.3L64.5 320.1L65.5 318.0L65.5 335.0L66.5 335.0L66.5 316.8L67.5 322.0L67.5 335.0L68.5 345.9L68.5 323.6L69.5 321.0L69.5 351.6L70.5 343.6L70.5 319.2L71.5 316.1L71.5 344.2L72.5 344.7L72.5 319.2L73.5 322.8L73.5 362.1L74.5 335.5L74.5 318.8L75.5 319.4L75.5 357.1L76.5 346.4L76.5 324.4L77.5 318.7L77.5 336.5L78.5 352.9L78.5 314.5L79.5 320.2L79.5 337.6L80.5 346.8L80.5 322.3L81.5 319.7L81.5 346.5L82.5 344.7L82.5 320.6L83.5 318.2L83.5 357.3L84.5 344.3L84.5 319.6L85.5 321.4L85.5 335.0L86.5 335.0L86.5 323.1L87.5 324.6L87.5 363.6L88.5 339.4L88.5 320.5L89.5 323.2L89.5 335.0L90.5 342.2L90.5 318.4L91.5 322.2L91.5 350.4L92.5 338.4L92.5 317.8L93.5 319.8L93.5 353.2L94.5 351.8L94.5 317.7L95.5 318.6L95.5 335.0L96.5 354.9L96.5 317.8L97.5 318.8L97.5 335.4L98.5 338.5L98.5 318.1L99.5 317.9L99.5 346.4L100.5 335.0L100.5 316.2L101.5 317.9L101.5 335.0L102.5 342.9L102.5 318.8L103.5 322.9L103.5 335.0L104.5 335.4L104.5 321.1L105.5 318.4L105.5 335.6L106.5 356.0L106.5 321.3L107.5 320.4L107.5 358.4L108.5 353.1L108.5 317.6L109.5 321.2L109.5 343.6L110.5 348.5L110.5 316.8L111.5 317.8L111.5 335.0L112.5 340.7L112.5 316.8L113.5 314.9L113.5 340.2L114.5 352.9L114.5 321.0L115.5 319.5L115.5 346.8L116.5 350.5L116.5 317.5L117.5 323.6L117.5 342.6L118.5 339.0L118.5 318.5L119.5 322.4L119.5 335.0L120.5 341.8L120.5 322.7L121.5 316.6L121.5 335.0L122.5 350.3L122.5 319.1L123.5 316.8L123.5 346.7L124.5 335.0L124.5 320.0L125.5 319.4L125.5 343.1L126.5 346.0L126.5 322.2L127.5 318.6L127.5 338.1L128.5 336.4L128.5 317.2L129.5 323.5L129.5 350.1L130.5 345.9L130.5 315.3L131.5 316.6L131.5 357.5L132.5 335.0L132.5 318.5L133.5 318.5L133.5 339.8L134.5 336.9L134.5 319.9L135.5 318.7L135.5 343.8L136.5 345.7L136.5 319.1L137.5 321.7L137.5 344.5L138.5 345.8L138.5 321.6L139.5 315.4L139.5 335.9L140.5 339.2L140.5 316.3L141.5 318.5L141.5 335.0L142.5 352.4L142.5 317.7L143.5 323.1L143.5 335.3L144.5 340.8L144.5 323.2L145.5 318.5L145.5 345.9L146.5 335.0L146.5 318.5L147.5 320.7L147.5 352.5L148.5 335.7L148.5 321.1L149.5 315.9L149.5 340.2L150.5 345.2L150.5 322.9L151.5 318.0L151.5 335.0L152.5 335.0L152.5 317.1L153.5 318.4L153.5 339.2L154.5 339.3L154.5 321.9L155.5 322.6L155.5 337.5L156.5 352.9L156.5 320.7L157.5 320.2L157.5 339.4L158.5 339.4L158.5 317.8L159.5 319.0L159.5 343.8L160.5 335.2L160.5 320.1L161.5 317.0L161.5 335.4L162.5 345.6L162.5 323.7L163.5 316.8L163.5 339.5L164.5 342.0L164.5 319.5L165.5 318.9L165.5 343.7L166.5 347.1L166.5 320.0L167.5 319.1L167.5 349.0L168.5 337.8L168.5 316.9L169.5 318.9L169.5 346.6L170.5 335.0L170.5 319.9L171.5 317.8L171.5 335.0L172.5 339.2L172.5 320.1L173.5 320.7L173.5 343.4L174.5 335.0L174.5 318.6L175.5 319.1L175.5 366.6L176.5 343.2L176.5 318.1L177.5 323.3L177.5 335.5L178.5 341.9L178.5 317.9L179.5 318.5L179.5 338.9L180.5 357.8L180.5 319.8L181.5 322.4L181.5 338.9L182.5 335.0L182.5 319.5L183.5 321.8L183.5 373.8L184.5 359.4L184.5 322.9L185.5 320.3L185.5 349.0L186.5 338.0L186.5 319.9L187.5 318.9L187.5 354.3L188.5 365.0L188.5 320.2L189.5 318.5L189.5 355.6L190.5 335.0L190.5 322.1L191.5 318.3L191.5 337.5L192.5 337.9L192.5 320.0L193.5 322.8L193.5 335.0L194.5 350.2L194.5 320.4L195.5 316.3L195.5 359.0L196.5 335.0L196.5 318.1L197.5 322.3L197.5 350.1L198.5 342.5L198.5 324.0L199.5 317.1L199.5 336.9L200.5 338.1L200.5 318.3L201.5 323.8L201.5 345.3L202.5 349.4L202.5 318.6L203.5 318.4L203.5 345.9L204.5 350.1L204.5 321.0L205.5 321.4L205.5 338.9L206.5 346.5L206.5 319.9L207.5 318.6L207.5 346.8L208.5 337.2L208.5 321.4L209.5 319.1L209.5 335.0L210.5 345.7L210.5 319.0L211.5 321.8L211.5 335.0L212.5 335.0L212.5 324.3L213.5 322.9L213.5 342.8L214.5 356.8L214.5 317.0L215.5 319.2L215.5 340.2L216.5 338.2L216.5 319.3L217.5 319.2L217.5 339.8L218.5 356.7L218.5 317.9L219.5 318.8L219.5 337.9L220.5 341.4L220.5 320.4L221.5 315.8L221.5 335.0L222.5 342.0L222.5 323.5L223.5 323.3L223.5 338.6L224.5 337.2L224.5 318.6L225.5 315.9L225.5 345.1L226.5 349.1L226.5 317.7L227.5 316.2L227.5 345.8L228.5 346.6L228.5 323.3L229.5 316.8L229.5 342.8L230.5 335.0L230.5 318.2L231.5 323.4L231.5 336.2L232.5 339.4L232.5 323.2L233.5 320.1L233.5 340.0L234.5 335.9L234.5 323.2L235.5 319.2L235.5 348.4L236.5 356.7L236.5 316.6L237.5 322.6L237.5 345.3L238.5 356.8L238.5 322.7L239.5 317.5L239.5 351.9L240.5 335.2L240.5 319.9L241.5 318.3L241.5 335.6L242.5 340.9L242.5 317.3L243.5 322.4L243.5 335.0L244.5 338.5L244.5 318.7L245.5 319.0L245.5 338.0L246.5 347.9L246.5 319.6L247.5 315.3L247.5 341.1L248.5 335.0L248.5 317.1L249.5 316.6L249.5 353.7L250.5 355.3L250.5 319.1L251.5 322.0L251.5 352.5L252.5 346.3L252.5 317.2L253.5 319.7L253.5 335.0L254.5 344.4L254.5 320.6L255.5 323.1L255.5 335.1L256.5 335.0L256.5 317.6L257.5 321.3L257.5 337.3L258.5 338.8L258.5 321.4L259.5 318.9L259.5 351.9L260.5 335.0L260.5 315.9L261.5 319.0L261.5 338.8L262.5 335.0L262.5 318.4L263.5 319.1L263.5 349.6L264.5 356.4L264.5 320.0L265.5 320.4L265.5 338.6L266.5 338.6L266.5 323.7L267.5 319.5L267.5 359.6L268.5 345.0L268.5 316.8L269.5 317.9L269.5 335.4L270.5 337.2L270.5 322.5L271.5 319.8L271.5 335.0L272.5 335.0L272.5 317.7L273.5 319.2L273.5 337.0L274.5 369.6L274.5 321.9L275.5 317.3L275.5 335.0L276.5 342.8L276.5 319.3L277.5 318.8L277.5 342.2L278.5 336.3L278.5 319.7L279.5 318.3L279.5 364.6L280.5 360.1L280.5 318.2L281.5 318.7L281.5 355.4L282.5 346.6L282.5 315.9L283.5 318.5L283.5 344.2L284.5 344.3L284.5 319.5L285.5 317.3L285.5 337.9L286.5 350.3L286.5 317.7L287.5 317.2L287.5 335.0L288.5 335.0L288.5 317.8L289.5 319.6L289.5 335.0L290.5 335.0L290.5 320.6L291.5 320.5L291.5 359.9L292.5 346.6L292.5 316.7L293.5 319.3L293.5 335.0L294.5 353.6L294.5 322.5L295.5 315.6L295.5 335.3L296.5 341.8L296.5 319.9L297.5 322.7L297.5 338.9L298.5 335.0L298.5 315.5L299.5 322.8L299.5 336.0L300.5 335.0L300.5 318.2L301.5 316.3L301.5 366.0L302.5 335.0L302.5 316.6L303.5 317.9L303.5 345.8L304.5 343.1L304.5 316.0L305.5 321.9L305.5 341.4L306.5 345.0L306.5 322.9L307.5 314.3L307.5 338.9L308.5 343.9L308.5 319.1L309.5 321.2L309.5 336.2L310.5 350.2L310.5 320.7L311.5 318.4L311.5 339.4L312.5 348.6L312.5 318.4L313.5 322.8L313.5 357.4L314.5 336.7L314.5 318.8L315.5 316.8L315.5 337.4L316.5 337.2L316.5 320.8L317.5 321.4L317.5 343.8L318.5 343.5L318.5 324.0L319.5 318.1L319.5 335.0L320.5 337.4L320.5 321.8L321.5 315.7L321.5 335.0L322.5 336.7L322.5 316.9L323.5 319.9L323.5 344.7L324.5 345.9L324.5 318.7L325.5 314.9L325.5 348.8L326.5 338.9L326.5 318.8L327.5 320.2L327.5 345.0L328.5 338.5L328.5 323.0L329.5 322.3L329.5 341.5L330.5 343.0L330.5 317.9L331.5 318.9L331.5 335.0L332.5 335.0L332.5 318.0L333.5 318.4L333.5 347.3L334.5 344.5L334.5 320.2L335.5 323.3L335.5 344.4L336.5 342.7L336.5 319.6L337.5 317.3L337.5 335.1L338.5 336.7L338.5 317.9L339.5 318.2L339.5 343.5L340.5 345.1L340.5 317.8L341.5 317.4L341.5 337.2L342.5 343.7L342.5 321.3L343.5 322.8L343.5 335.0L344.5 341.8L344.5 316.8L345.5 318.4L345.5 360.5L346.5 343.0L346.5 317.2L347.5 317.1L347.5 335.0L348.5 346.9L348.5 315.7L349.5 316.2L349.5 335.0L350.5 340.6L350.5 317.5L351.5 322.4L351.5 345.0L352.5 335.1L352.5 318.1L353.5 319.7L353.5 349.7L354.5 361.1L354.5 320.5L355.5 317.9L355.5 337.7L356.5 341.8L356.5 317.3L357.5 316.4L357.5 339.7L358.5 335.8L358.5 313.8L359.5 313.0L359.5 349.6L360.5 386.8L360.5 319.4L361.5 314.6L361.5 338.9L362.5 335.6L362.5 320.9L363.5 317.7L363.5 339.7L364.5 346.2L364.5 314.9L365.5 317.5L365.5 339.4L366.5 341.2L366.5 320.3L367.5 319.0L367.5 335.0L368.5 335.3L368.5 315.3L369.5 321.0L369.5 340.9L370.5 337.7L370.5 319.7L371.5 317.3L371.5 338.6L372.5 340.5L372.5 312.9L373.5 315.2L373.5 345.2L374.5 341.9L374.5 313.0L375.5 314.5L375.5 342.6L376.5 341.3L376.5 317.6L377.5 319.0L377.5 340.1L378.5 339.4L378.5 315.1L379.5 312.4L379.5 349.6L380.5 335.0L380.5 314.7L381.5 318.9L381.5 343.9L382.5 347.8L382.5 315.0L383.5 315.3L383.5 351.1L384.5 335.0L384.5 314.3L385.5 313.7L385.5 338.8L386.5 335.0L386.5 314.9L387.5 316.5L387.5 335.0L388.5 338.5L388.5 314.6L389.5 315.1L389.5 341.9L390.5 349.2L390.5 314.0L391.5 312.9L391.5 353.0L392.5 342.2L392.5 317.2L393.5 310.6L393.5 346.3L394.5 343.1L394.5 314.3L395.5 312.6L395.5 340.7L396.5 344.2L396.5 310.1L397.5 315.8L397.5 361.2L398.5 343.4L398.5 309.2L399.5 308.9L399.5 341.7L400.5 341.1L400.5 309.1L401.5 308.3L401.5 337.7L402.5 338.6L402.5 312.3L403.5 310.4L403.5 351.1L404.5 345.7L404.5 304.4L405.5 306.9L405.5 358.6L406.5 335.5L406.5 301.7L407.5 302.7L407.5 350.5L408.5 350.2L408.5 297.7L409.5 300.8L409.5 345.2L410.5 350.7L410.5 292.7L411.5 288.2L411.5 344.4L412.5 286.4L412.5 274.9" stroke="#4caf50"/>
<path d="M412.5 274.9L413.04 269.2L413.13 268.4L413.21 266.2L413.29 252.3L413.38 228.8L413.46 207.3L413.54 187.8L413.63 170.4L413.71 155.0L413.79 141.6L413.88 130.3L413.96 120.9L414.04 113.6L414.12 108.4L414.21 105.1L414.29 103.9L414.37 104.7L414.46 107.5L414.54 112.4L414.62 119.3L414.71 128.2L414.79 139.1L414.87 152.1L414.96 167.0L415.04 184.1L415.12 203.1L415.21 224.2L415.29 247.3L415.37 262.8L415.46 264.8L415.54 262.7L415.62 281.1L415.71 264.8L415.79 274.0L415.87 280.6L415.96 277.8" stroke="#4caf50" stroke-width="0.95"/>
<path d="M415.96 277.8L416.5 273.0L416.5 338.5L417.5 346.3L417.5 286.2L418.5 290.6L418.5 352.3L419.5 335.0L419.5 301.2L420.5 298.7L420.5 344.8L421.5 337.0L421.5 304.1L422.5 301.2L422.5 348.5L423.5 339.6L423.5 303.9L424.5 303.7L424.5 348.4L425.5 338.0L425.5 304.0L426.5 306.8L426.5 338.5L427.5 339.7L427.5 310.4L428.5 307.1L428.5 335.0L429.5 337.4L429.5 310.9L430.5 309.7L430.5 356.4L431.5 349.3L431.5 310.0L432.5 308.6L432.5 340.7L433.5 346.1L433.5 311.8L434.5 310.6L434.5 369.8L435.5 352.0L435.5 312.5L436.5 317.1L436.5 359.4L437.5 350.0L437.5 310.8L438.5 311.0L438.5 342.1L439.5 335.0L439.5 311.4L440.5 313.3L440.5 344.3L441.5 352.1L441.5 314.7L442.5 312.2L442.5 349.7L443.5 335.0L443.5 318.3L444.5 314.1L444.5 338.7L445.5 335.0L445.5 319.6L446.5 313.0L446.5 338.9L447.5 345.4L447.5 313.9L448.5 314.4L448.5 351.1L449.5 343.0L449.5 314.7L450.5 320.2L450.5 359.4L451.5 335.0L451.5 319.1L452.5 314.9L452.5 335.0L453.5 335.0L453.5 320.4L454.5 314.3L454.5 335.1L455.5 335.0L455.5 315.4L456.5 320.8L456.5 337.6L457.5 342.4L457.5 317.2L458.5 315.1L458.5 357.4L459.5 353.8L459.5 315.5L460.5 315.7L460.5 335.0L461.5 335.0L461.5 317.0L462.5 316.1L462.5 341.0L463.5 336.5L463.5 313.1L464.5 314.0L464.5 346.8L465.5 338.6L465.5 317.9L466.5 320.0L466.5 351.8L467.5 339.8L467.5 320.8L468.5 316.3L468.5 341.0L469.5 343.8L469.5 318.7L470.5 312.1L470.5 343.9L471.5 340.9L471.5 316.3L472.5 315.8L472.5 335.0L473.5 335.0L473.5 313.6L474.5 313.4L474.5 350.4L475.5 345.8L475.5 318.0L476.5 320.8L476.5 344.9L477.5 335.0L477.5 316.1L478.5 319.2L478.5 343.3L479.5 335.4L479.5 318.5L480.5 317.2L480.5 341.3L481.5 345.9L481.5 319.3L482.5 321.3L482.5 335.0L483.5 337.5L483.5 317.3L484.5 313.9L484.5 338.6L485.5 335.0L485.5 319.6L486.5 317.5L486.5 337.4L487.5 336.1L487.5 321.6L488.5 321.5L488.5 344.5L489.5 341.6L489.5 319.7L490.5 321.7L490.5 335.0L491.5 344.4L491.5 315.9L492.5 316.6L492.5 335.0L493.5 343.7L493.5 315.9L494.5 322.1L494.5 344.9L495.5 343.2L495.5 320.9L496.5 321.3L496.5 335.8L497.5 339.4L497.5 319.3L498.5 318.7L498.5 336.5L499.5 351.2L499.5 319.2L500.5 315.2L500.5 335.0L501.5 345.7L501.5 318.6L502.5 317.0L502.5 336.5L503.5 349.3L503.5 322.9L504.5 317.8L504.5 335.0L505.5 346.9L505.5 319.6L506.5 318.9L506.5 354.5L507.5 335.7L507.5 317.6L508.5 314.8L508.5 335.0L509.5 335.0L509.5 316.3L510.5 316.4L510.5 343.7L511.5 344.3L511.5 318.8L512.5 318.0L512.5 349.4L513.5 341.3L513.5 321.9L514.5 316.3L514.5 360.5L515.5 335.7L515.5 319.6L516.5 323.7L516.5 335.6L517.5 343.4L517.5 318.8L518.5 322.7L518.5 355.1L519.5 357.4L519.5 319.4L520.5 316.1L520.5 338.6L521.5 343.5L521.5 317.4L522.5 318.5L522.5 362.9L523.5 347.8L523.5 317.6L524.5 319.4L524.5 335.0L525.5 349.4L525.5 317.8L526.5 319.1L526.5 340.0L527.5 352.0L527.5 315.0L528.5 317.4L528.5 349.5L529.5 353.1L529.5 319.7L530.5 321.2L530.5 348.8L531.5 335.0L531.5 316.3L532.5 323.1L532.5 341.6L533.5 335.3L533.5 317.1L534.5 322.8L534.5 335.0L535.5 335.0L535.5 319.3L536.5 318.1L536.5 335.0L537.5 349.8L537.5 315.5L538.5 316.5L538.5 340.4L539.5 351.8L539.5 318.2L540.5 319.8L540.5 342.6L541.5 342.7L541.5 317.8L542.5 319.5L542.5 337.0L543.5 340.6L543.5 318.7L544.5 319.7L544.5 335.7L545.5 335.0L545.5 316.5L546.5 323.7L546.5 343.7L547.5 341.9L547.5 318.1L548.5 315.9L548.5 345.9L549.5 341.7L549.5 315.9L550.5 318.1L550.5 343.1L551.5 358.1L551.5 316.4L552.5 318.9L552.5 354.4L553.5 336.0L553.5 322.6L554.5 317.7L554.5 359.7L555.5 351.2L555.5 317.2L556.5 318.7L556.5 340.1L557.5 347.6L557.5 321.1L558.5 317.9L558.5 342.6L559.5 335.9L559.5 319.2L560.5 318.5L560.5 348.2L561.5 349.0L561.5 316.5L562.5 322.7L562.5 335.0L563.5 346.1L563.5 317.1L564.5 317.8L564.5 344.9L565.5 341.4L565.5 318.0L566.5 319.0L566.5 343.6L567.5 335.0L567.5 317.7L568.5 317.9L568.5 340.5L569.5 335.0L569.5 318.2L570.5 319.5L570.5 335.0L571.5 352.5L571.5 318.4L572.5 320.0L572.5 346.0L573.5 335.0L573.5 321.4L574.5 315.3L574.5 351.4L575.5 339.4L575.5 319.2L576.5 322.9L576.5 339.7L577.5 344.5L577.5 319.2L578.5 318.6L578.5 339.5L579.5 348.1L579.5 321.8L580.5 315.9L580.5 344.2L581.5 345.4L581.5 317.2L582.5 323.1L582.5 340.5L583.5 356.7L583.5 314.1L584.5 323.0L584.5 335.0L585.5 343.8L585.5 320.4L586.5 323.3L586.5 335.0L587.5 357.1L587.5 319.2L588.5 317.6L588.5 335.0L589.5 352.3L589.5 318.1L590.5 317.0L590.5 363.4L591.5 335.0L591.5 315.4L592.5 316.7L592.5 347.4L593.5 339.1L593.5 317.4L594.5 323.0L594.5 343.4L595.5 343.0L595.5 316.5L596.5 317.2L596.5 340.1L597.5 350.0L597.5 318.3L598.5 317.1L598.5 336.3L599.5 335.0L599.5 321.0L600.5 319.0L600.5 347.2L601.5 341.4L601.5 322.7L602.5 319.9L602.5 338.6L603.5 341.0L603.5 320.2L604.5 324.0L604.5 344.6L605.5 347.9L605.5 315.1L606.5 319.9L606.5 342.5L607.5 345.8L607.5 320.7L608.5 319.3L608.5 335.0L609.5 357.7L609.5 321.3L610.5 318.2L610.5 338.9L611.5 347.5L611.5 318.9L612.5 319.7L612.5 335.0L613.5 335.0L613.5 320.9L614.5 321.7L614.5 350.4L615.5 338.2L615.5 319.5L616.5 321.8L616.5 353.6L617.5 344.3L617.5 317.8L618.5 318.9L618.5 351.4L619.5 343.4L619.5 323.6L620.5 317.4L620.5 335.0L621.5 335.0L621.5 320.2L622.5 323.9L622.5 340.1L623.5 348.3L623.5 324.1L624.5 322.0L624.5 341.2L625.5 336.0L625.5 320.0L626.5 316.6L626.5 337.0L627.5 335.0L627.5 319.7L628.5 321.1L628.5 338.6L629.5 356.9L629.5 319.7L630.5 317.7L630.5 344.5L631.5 335.0L631.5 318.3L632.5 320.8L632.5 335.0L633.5 339.6L633.5 318.3L634.5 317.1L634.5 345.7L635.5 341.7L635.5 318.0L636.5 323.9L636.5 344.4L637.5 339.7L637.5 323.9L638.5 322.8L638.5 335.0L639.5 343.1L639.5 318.3L640.5 318.7L640.5 339.5L641.5 335.0L641.5 319.5L642.5 318.1L642.5 335.0L643.5 335.0L643.5 315.6L644.5 318.1L644.5 352.1L645.5 335.0L645.5 324.5L646.5 319.6L646.5 344.9L647.5 362.9L647.5 323.1L648.5 318.9L648.5 337.6L649.5 335.0L649.5 321.7L650.5 318.7L650.5 351.5L651.5 346.7L651.5 316.5L652.5 318.2L652.5 349.5L653.5 357.0L653.5 324.1L654.5 317.1L654.5 342.4L655.5 335.0L655.5 323.8L656.5 319.1L656.5 338.4L657.5 355.7L657.5 320.1L658.5 319.5L658.5 337.0L659.5 335.0L659.5 324.0L660.5 322.9L660.5 359.9L661.5 335.0L661.5 316.8L662.5 316.8L662.5 348.6L663.5 336.5L663.5 323.3L664.5 320.1L664.5 335.0L665.5 335.4L665.5 323.5L666.5 320.2L666.5 349.9L667.5 344.1L667.5 319.0L668.5 317.6L668.5 337.9L669.5 346.2L669.5 318.6L670.5 322.0L670.5 347.1L671.5 341.9L671.5 324.2L672.5 316.5L672.5 342.0L673.5 335.0L673.5 323.9L674.5 316.5L674.5 352.2L675.5 357.4L675.5 322.7L676.5 319.0L676.5 348.9L677.5 341.1L677.5 321.8L678.5 318.3L678.5 338.2L679.5 351.1L679.5 319.2L680.5 316.5L680.5 360.5L681.5 335.0L681.5 320.3L682.5 320.6L682.5 358.2L683.5 340.2L683.5 320.9L684.5 323.3L684.5 335.0L685.5 340.7L685.5 323.2L686.5 314.8L686.5 345.1L687.5 343.9L687.5 318.2L688.5 318.9L688.5 335.0L689.5 351.2L689.5 322.1L690.5 317.9L690.5 370.4L691.5 344.2L691.5 319.6L692.5 322.9L692.5 335.0L693.5 338.8L693.5 318.2L694.5 322.7L694.5 335.9L695.5 354.3L695.5 320.0L696.5 320.5L696.5 336.9L697.5 349.1L697.5 316.9L698.5 314.2L698.5 343.8L699.5 348.2L699.5 317.9L700.5 320.3L700.5 343.0L701.5 356.1L701.5 319.2L702.5 317.7L702.5 338.3L703.5 340.1L703.5 320.0L704.5 316.7L704.5 335.0L705.5 337.8L705.5 316.9L706.5 317.0L706.5 344.0L707.5 336.7L707.5 320.7L708.5 318.0L708.5 341.7L709.5 345.0L709.5 322.6L710.5 317.9L710.5 347.1L711.5 335.0L711.5 317.9L712.5 317.6L712.5 350.8L713.5 344.9L713.5 318.4L714.5 321.3L714.5 345.3L715.5 338.1L715.5 318.9L716.5 316.1L716.5 354.5L717.5 357.1L717.5 317.4L718.5 319.1L718.5 353.2L719.5 335.0L719.5 320.3L720.5 322.4L720.5 347.2L721.5 335.0L721.5 318.0L722.5 316.5L722.5 345.2L723.5 353.8L723.5 319.4L724.5 316.9L724.5 341.6L725.5 341.2L725.5 314.5L726.5 319.9L726.5 335.0L727.5 348.3L727.5 323.3L728.5 317.9L728.5 337.3L729.5 347.7L729.5 318.3L730.5 323.3L730.5 335.0L731.5 342.6L731.5 318.6L732.5 316.2L732.5 346.4L733.5 364.3L733.5 323.6L734.5 319.3L734.5 361.7L735.5 335.5L735.5 317.8L736.5 319.2L736.5 346.0L737.5 335.6L737.5 316.8L738.5 317.4L738.5 338.1L739.5 359.2L739.5 317.6L740.5 323.6L740.5 338.1L741.5 335.0L741.5 318.8L742.5 319.7L742.5 364.7L743.5 348.9L743.5 323.7L744.5 319.4L744.5 341.6L745.5 354.0L745.5 319.5L746.5 317.0L746.5 343.5L747.5 339.1L747.5 320.4L748.5 319.0L748.5 341.4L749.5 340.7L749.5 316.4L750.5 318.4L750.5 335.0L751.5 335.0L751.5 323.3L752.5 318.9L752.5 335.0L753.5 335.0L753.5 322.1L754.5 319.6L754.5 335.0L755.5 335.0L755.5 319.1L756.5 317.7L756.5 339.2L757.5 335.0L757.5 322.8L758.5 317.7L758.5 344.0L759.5 338.2L759.5 321.7L760.5 317.4L760.5 340.1L761.5 335.0L761.5 317.6L762.5 318.6L762.5 342.2L763.5 343.4L763.5 319.0L764.5 319.5L764.5 340.2L765.5 344.2L765.5 322.3L766.5 319.1L766.5 345.1L767.5 340.8L767.5 323.6L768.5 322.9L768.5 355.2L769.5 365.3L769.5 321.7L770.5 315.6L770.5 346.1L771.5 346.1L771.5 323.2L772.5 315.3L772.5 348.9L773.5 341.2L773.5 321.1L774.5 317.9L774.5 347.1L775.5 335.4L775.5 322.1L776.5 320.9L776.5 336.7L777.5 344.9L777.5 319.5L778.5 318.5L778.5 340.1L779.5 337.0L779.5 319.3L780.5 319.5L780.5 352.5L781.5 346.3L781.5 318.2L782.5 320.8L782.5 339.5L783.5 343.1L783.5 319.4L784.5 323.9L784.5 341.9L785.5 342.2L785.5 318.0L786.5 322.1L786.5 339.2L787.5 339.5L787.5 319.8L788.5 318.6L788.5 336.1L789.5 335.0L789.5 322.2L790.5 317.1L790.5 362.0L791.5 341.8L791.5 322.6L792.5 317.5L792.5 338.3L793.5 343.0L793.5 319.1L794.5 321.2L794.5 341.1L795.5 339.8L795.5 319.3L796.5 321.0L796.5 355.3" stroke="#4caf50"/>

</g>
<line x1="31.2" y1="416" x2="32.8" y2="421.5" stroke="#1fd01f" stroke-width="1"/>
<polygon points="414.4,88 420,95 414.4,102.2 408.8,95" fill="#10f010"/>

<!-- loop icon -->
<g fill="none" stroke="#f2f2f2" stroke-width="1.8" stroke-linecap="round" stroke-linejoin="round" transform="translate(-0.4,0)">
<path d="M140,20.2 V16.4 Q140,13.3 143.2,13.3 H162.2"/>
<path d="M159.4,10.3 L162.6,13.3 L159.4,16.4"/>
<path d="M162,19.4 V23 Q162,26.1 158.8,26.1 H139.8"/>
<path d="M143,23 L139.8,26.1 L143,29.2"/>
</g>
<g fill="none" stroke="#d8d8d8" stroke-width="1.2" stroke-linejoin="round" stroke-linecap="round">
<path d="M11.6,470.2 V468 Q11.6,465.6 14,465.6 H16.6 M32.2,465.6 H34.8 Q37.2,465.6 37.2,468 V470.2 M37.2,486.4 V488.6 Q37.2,491 34.8,491 H32.2 M16.6,491 H14 Q11.6,491 11.6,488.6 V486.4"/>
<rect x="16.3" y="469.9" width="16.2" height="16.4" rx="1.7"/>
<path d="M16.6,480.7 L18.3,478.6 L19.9,477.4 L21.8,478.9 L23.4,478 L25.6,480.6 L27.5,480 L30.1,481.2 L32.3,483.4"/>
<circle cx="26.6" cy="475.2" r="1.6" fill="#a8a8a8" stroke="#6c6c6c" stroke-width="0.9"/>
<path d="M55.4,469.4 Q55.4,467.3 57.5,467.3 H64.3 Q65.3,467.3 65.9,468.2 L67.5,470.4 H78.5 Q80.6,470.4 80.6,472.5 V487.2 Q80.6,489.3 78.5,489.3 H57.5 Q55.4,489.3 55.4,487.2 Z M55.4,473.3 H80.6"/>
<path d="M125.70,478.00L125.69,477.64L125.67,477.28L125.63,476.93L125.56,476.57L125.44,476.23L125.20,475.91L124.75,475.64L124.08,475.43L123.37,475.27L122.83,475.10L122.51,474.89L122.31,474.65L122.16,474.40L122.04,474.14L121.93,473.89L121.83,473.62L121.73,473.36L121.66,473.08L121.63,472.77L121.71,472.39L121.97,471.89L122.36,471.27L122.69,470.65L122.81,470.15L122.75,469.75L122.60,469.42L122.40,469.12L122.17,468.84L121.94,468.57L121.69,468.31L121.43,468.06L121.16,467.83L120.88,467.60L120.58,467.40L120.25,467.25L119.85,467.19L119.35,467.31L118.73,467.64L118.11,468.03L117.61,468.29L117.23,468.37L116.92,468.34L116.64,468.27L116.38,468.17L116.11,468.07L115.86,467.96L115.60,467.84L115.35,467.69L115.11,467.49L114.90,467.17L114.73,466.63L114.57,465.92L114.36,465.25L114.09,464.80L113.77,464.56L113.43,464.44L113.07,464.37L112.72,464.33L112.36,464.31L112.00,464.30L111.64,464.31L111.28,464.33L110.93,464.37L110.57,464.44L110.23,464.56L109.91,464.80L109.64,465.25L109.43,465.92L109.27,466.63L109.10,467.17L108.89,467.49L108.65,467.69L108.40,467.84L108.14,467.96L107.89,468.07L107.62,468.17L107.36,468.27L107.08,468.34L106.77,468.37L106.39,468.29L105.89,468.03L105.27,467.64L104.65,467.31L104.15,467.19L103.75,467.25L103.42,467.40L103.12,467.60L102.84,467.83L102.57,468.06L102.31,468.31L102.06,468.57L101.83,468.84L101.60,469.12L101.40,469.42L101.25,469.75L101.19,470.15L101.31,470.65L101.64,471.27L102.03,471.89L102.29,472.39L102.37,472.77L102.34,473.08L102.27,473.36L102.17,473.62L102.07,473.89L101.96,474.14L101.84,474.40L101.69,474.65L101.49,474.89L101.17,475.10L100.63,475.27L99.92,475.43L99.25,475.64L98.80,475.91L98.56,476.23L98.44,476.57L98.37,476.93L98.33,477.28L98.31,477.64L98.30,478.00L98.31,478.36L98.33,478.72L98.37,479.07L98.44,479.43L98.56,479.77L98.80,480.09L99.25,480.36L99.92,480.57L100.63,480.73L101.17,480.90L101.49,481.11L101.69,481.35L101.84,481.60L101.96,481.86L102.07,482.11L102.17,482.38L102.27,482.64L102.34,482.92L102.37,483.23L102.29,483.61L102.03,484.11L101.64,484.73L101.31,485.35L101.19,485.85L101.25,486.25L101.40,486.58L101.60,486.88L101.83,487.16L102.06,487.43L102.31,487.69L102.57,487.94L102.84,488.17L103.12,488.40L103.42,488.60L103.75,488.75L104.15,488.81L104.65,488.69L105.27,488.36L105.89,487.97L106.39,487.71L106.77,487.63L107.08,487.66L107.36,487.73L107.62,487.83L107.89,487.93L108.14,488.04L108.40,488.16L108.65,488.31L108.89,488.51L109.10,488.83L109.27,489.37L109.43,490.08L109.64,490.75L109.91,491.20L110.23,491.44L110.57,491.56L110.93,491.63L111.28,491.67L111.64,491.69L112.00,491.70L112.36,491.69L112.72,491.67L113.07,491.63L113.43,491.56L113.77,491.44L114.09,491.20L114.36,490.75L114.57,490.08L114.73,489.37L114.90,488.83L115.11,488.51L115.35,488.31L115.60,488.16L115.86,488.04L116.11,487.93L116.38,487.83L116.64,487.73L116.92,487.66L117.23,487.63L117.61,487.71L118.11,487.97L118.73,488.36L119.35,488.69L119.85,488.81L120.25,488.75L120.58,488.60L120.88,488.40L121.16,488.17L121.43,487.94L121.69,487.69L121.94,487.43L122.17,487.16L122.40,486.88L122.60,486.58L122.75,486.25L122.81,485.85L122.69,485.35L122.36,484.73L121.97,484.11L121.71,483.61L121.63,483.23L121.66,482.92L121.73,482.64L121.83,482.38L121.93,482.11L122.04,481.86L122.16,481.60L122.31,481.35L122.51,481.11L122.83,480.90L123.37,480.73L124.08,480.57L124.75,480.36L125.20,480.09L125.44,479.77L125.56,479.43L125.63,479.07L125.67,478.72L125.69,478.36Z"/>
<circle cx="112.0" cy="478.0" r="5.7"/>
<circle cx="155.6" cy="477.8" r="13.0"/>
<path d="M197.2,466.6 H202.4 V478.6 H206 L199.8,484.8 L193.5,478.6 H197.2 Z"/>
<path d="M194.4,482.2 H189.2 Q187.8,482.2 187.8,483.6 V488.4 Q187.8,489.8 189.2,489.8 H209.4 Q210.8,489.8 210.8,488.4 V483.6 Q210.8,482.2 209.4,482.2 H205.1"/>
</g>
<text x="155.7" y="485.3" text-anchor="middle" font-size="19.5" fill="#d6d6d6" font-family="Liberation Sans, sans-serif">?</text>
<g fill="#6cff00"><rect x="240.7" y="468.8" width="5.4" height="4.2" rx="0.9"/><path d="M238.9,475.7 H246.1 V485.1 H247.7 V488.1 H238.9 V485.1 H241.6 V478.7 H238.9 Z"/></g>
<g fill="none" stroke="#b4bcb6" stroke-width="0.9" stroke-linejoin="round"><rect x="657.9" y="474.2" width="5.5" height="3.1"/><path d="M656.7,482.4 V478.6 Q656.7,477.3 658,477.3 H663.3 Q664.6,477.3 664.6,478.6 V482.4"/></g>
<g fill="none" stroke="#dcdcdc" stroke-width="0.95" stroke-linejoin="miter">
<path transform="translate(773.10,475.50) rotate(45)" d="M0,0 L-4.2,-4.2 L-4.2,-1.55 L-10.8,-1.55 L-10.8,1.55 L-4.2,1.55 L-4.2,4.2 Z"/><path transform="translate(778.10,475.50) rotate(135)" d="M0,0 L-4.2,-4.2 L-4.2,-1.55 L-10.8,-1.55 L-10.8,1.55 L-4.2,1.55 L-4.2,4.2 Z"/><path transform="translate(773.10,480.50) rotate(-45)" d="M0,0 L-4.2,-4.2 L-4.2,-1.55 L-10.8,-1.55 L-10.8,1.55 L-4.2,1.55 L-4.2,4.2 Z"/><path transform="translate(778.10,480.50) rotate(-135)" d="M0,0 L-4.2,-4.2 L-4.2,-1.55 L-10.8,-1.55 L-10.8,1.55 L-4.2,1.55 L-4.2,4.2 Z"/></g>

</svg>
</div>
</body>
</html>
